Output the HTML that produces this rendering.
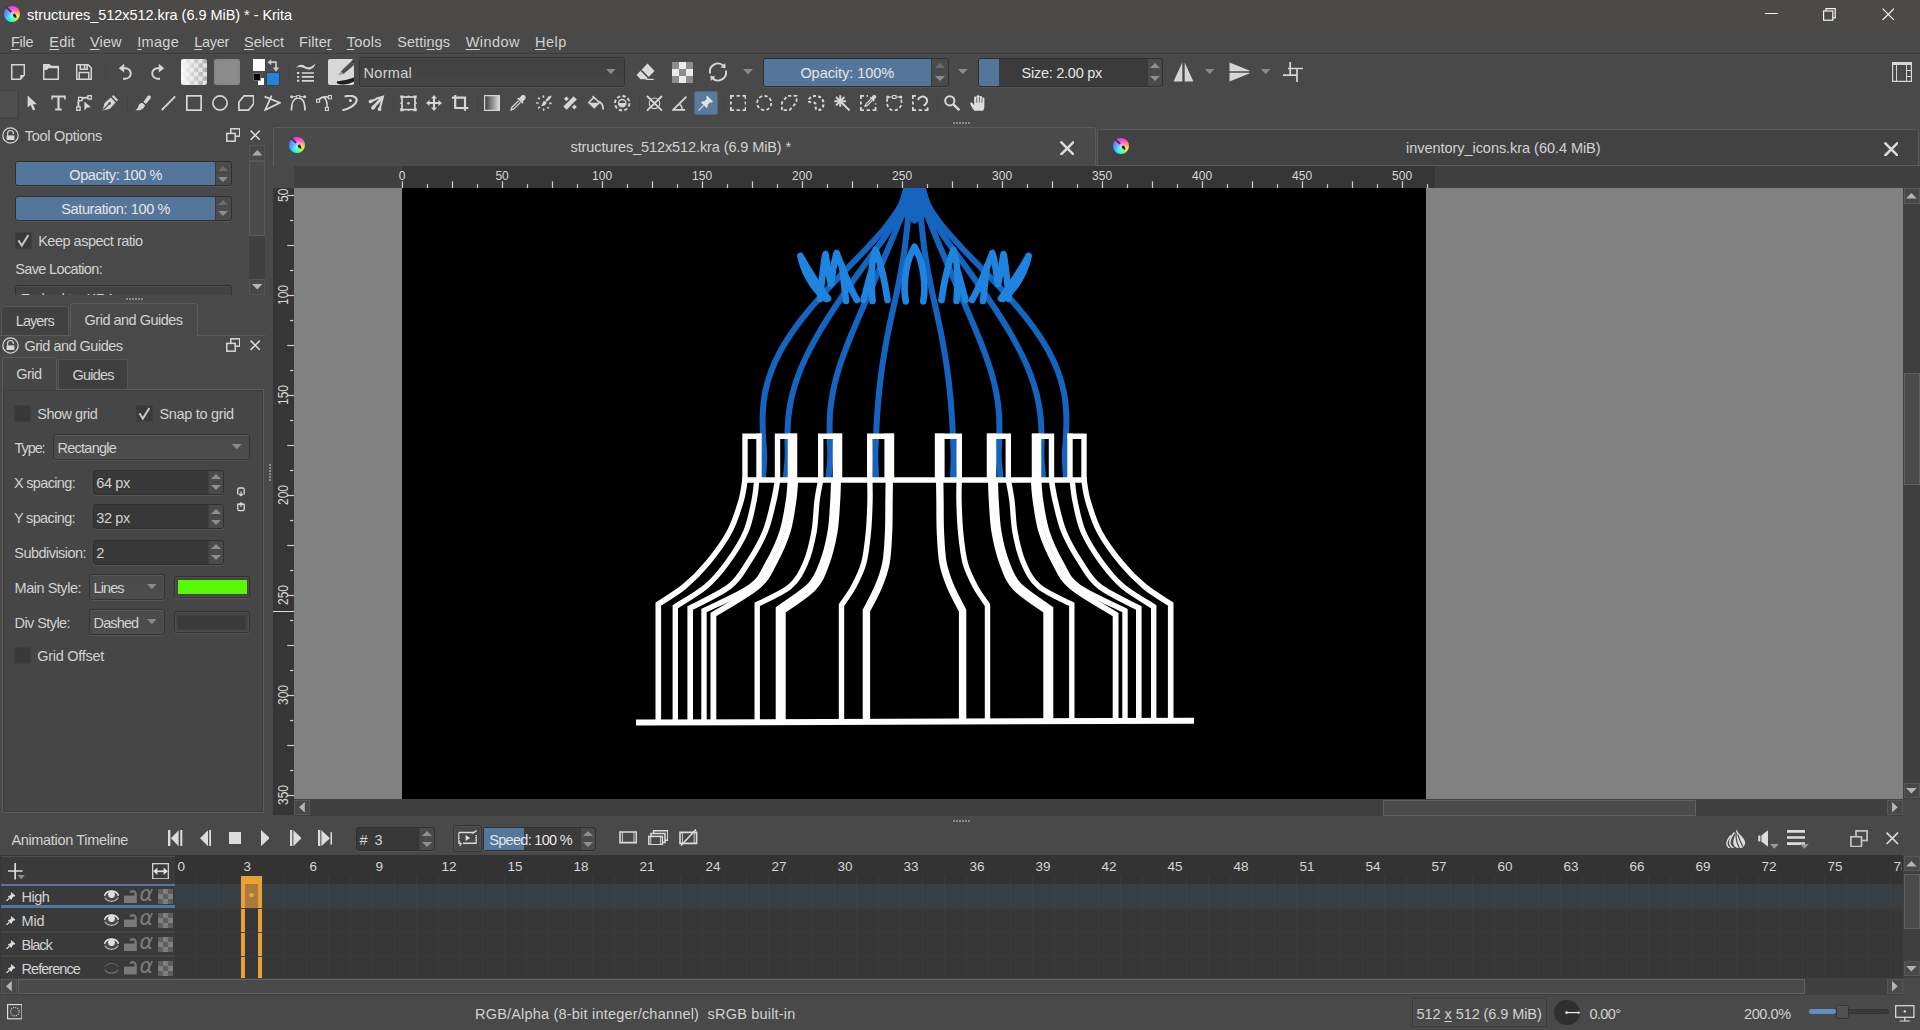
<!DOCTYPE html><html><head><meta charset="utf-8"><title>Krita</title><style>html,body{margin:0;padding:0}body{width:1920px;height:1030px;overflow:hidden;background:#494949;position:relative;font-family:"Liberation Sans",sans-serif;font-size:15px;color:#d2d2d2}
body div,body svg,body span.t{position:absolute;box-sizing:border-box}
span.t{white-space:pre}svg{overflow:hidden}
</style></head><body><svg style="left:294px;top:188px;width:1609px;height:611px;" viewBox="294 188 1609 611"><rect x="294" y="188" width="1609" height="611" fill="#818181"/><rect x="402" y="188" width="1024" height="611" fill="#000"/><g fill="none" stroke="#1565c0" stroke-width="6" stroke-linecap="butt"><path d="M907.20,184.00 C906.13,187.50 904.25,198.00 900.80,205.00 C897.35,212.00 891.97,219.00 886.50,226.00 C881.03,233.00 874.45,240.00 868.00,247.00 C861.55,254.00 854.52,261.00 847.80,268.00 C841.08,275.00 834.15,282.00 827.70,289.00 C821.25,296.00 814.88,303.00 809.10,310.00 C803.32,317.00 797.87,324.00 793.00,331.00 C788.13,338.00 783.65,345.00 779.90,352.00 C776.15,359.00 773.02,366.00 770.50,373.00 C767.98,380.00 766.10,387.00 764.80,394.00 C763.50,401.00 763.00,408.00 762.70,415.00 C762.40,422.00 762.75,429.00 763.00,436.00 C763.25,443.00 764.22,450.00 764.20,457.00 C764.18,464.00 763.12,474.50 762.90,478.00"/><path d="M909.20,184.00 C908.30,187.50 906.65,198.00 903.80,205.00 C900.95,212.00 896.47,219.00 892.10,226.00 C887.73,233.00 882.57,240.00 877.60,247.00 C872.63,254.00 867.35,261.00 862.30,268.00 C857.25,275.00 852.17,282.00 847.30,289.00 C842.43,296.00 837.65,303.00 833.10,310.00 C828.55,317.00 824.10,324.00 820.00,331.00 C815.90,338.00 811.98,345.00 808.50,352.00 C805.02,359.00 801.78,366.00 799.10,373.00 C796.42,380.00 794.15,387.00 792.40,394.00 C790.65,401.00 789.43,408.00 788.60,415.00 C787.77,422.00 787.57,429.00 787.40,436.00 C787.23,443.00 787.85,450.00 787.60,457.00 C787.35,464.00 786.18,474.50 785.90,478.00"/><path d="M911.80,184.00 C910.78,187.50 908.07,198.00 905.70,205.00 C903.33,212.00 900.40,219.00 897.60,226.00 C894.80,233.00 891.85,240.00 888.90,247.00 C885.95,254.00 882.90,261.00 879.90,268.00 C876.90,275.00 873.92,282.00 870.90,289.00 C867.88,296.00 864.80,303.00 861.80,310.00 C858.80,317.00 855.77,324.00 852.90,331.00 C850.03,338.00 847.17,345.00 844.60,352.00 C842.03,359.00 839.52,366.00 837.50,373.00 C835.48,380.00 833.77,387.00 832.50,394.00 C831.23,401.00 830.37,408.00 829.90,415.00 C829.43,422.00 829.63,429.00 829.70,436.00 C829.77,443.00 830.52,450.00 830.30,457.00 C830.08,464.00 828.72,474.50 828.40,478.00"/><path d="M913.60,184.00 C912.93,187.50 910.65,198.00 909.60,205.00 C908.55,212.00 908.08,219.00 907.30,226.00 C906.52,233.00 905.85,240.00 904.90,247.00 C903.95,254.00 902.83,261.00 901.60,268.00 C900.37,275.00 898.95,282.00 897.50,289.00 C896.05,296.00 894.42,303.00 892.90,310.00 C891.38,317.00 889.80,324.00 888.40,331.00 C887.00,338.00 885.68,345.00 884.50,352.00 C883.32,359.00 882.23,366.00 881.30,373.00 C880.37,380.00 879.58,387.00 878.90,394.00 C878.22,401.00 877.68,408.00 877.20,415.00 C876.72,422.00 876.30,429.00 876.00,436.00 C875.70,443.00 875.40,450.00 875.40,457.00 C875.40,464.00 875.90,474.50 876.00,478.00"/></g><g transform="translate(1829,0) scale(-1,1)"><g fill="none" stroke="#1565c0" stroke-width="6" stroke-linecap="butt"><path d="M907.20,184.00 C906.13,187.50 904.25,198.00 900.80,205.00 C897.35,212.00 891.97,219.00 886.50,226.00 C881.03,233.00 874.45,240.00 868.00,247.00 C861.55,254.00 854.52,261.00 847.80,268.00 C841.08,275.00 834.15,282.00 827.70,289.00 C821.25,296.00 814.88,303.00 809.10,310.00 C803.32,317.00 797.87,324.00 793.00,331.00 C788.13,338.00 783.65,345.00 779.90,352.00 C776.15,359.00 773.02,366.00 770.50,373.00 C767.98,380.00 766.10,387.00 764.80,394.00 C763.50,401.00 763.00,408.00 762.70,415.00 C762.40,422.00 762.75,429.00 763.00,436.00 C763.25,443.00 764.22,450.00 764.20,457.00 C764.18,464.00 763.12,474.50 762.90,478.00"/><path d="M909.20,184.00 C908.30,187.50 906.65,198.00 903.80,205.00 C900.95,212.00 896.47,219.00 892.10,226.00 C887.73,233.00 882.57,240.00 877.60,247.00 C872.63,254.00 867.35,261.00 862.30,268.00 C857.25,275.00 852.17,282.00 847.30,289.00 C842.43,296.00 837.65,303.00 833.10,310.00 C828.55,317.00 824.10,324.00 820.00,331.00 C815.90,338.00 811.98,345.00 808.50,352.00 C805.02,359.00 801.78,366.00 799.10,373.00 C796.42,380.00 794.15,387.00 792.40,394.00 C790.65,401.00 789.43,408.00 788.60,415.00 C787.77,422.00 787.57,429.00 787.40,436.00 C787.23,443.00 787.85,450.00 787.60,457.00 C787.35,464.00 786.18,474.50 785.90,478.00"/><path d="M911.80,184.00 C910.78,187.50 908.07,198.00 905.70,205.00 C903.33,212.00 900.40,219.00 897.60,226.00 C894.80,233.00 891.85,240.00 888.90,247.00 C885.95,254.00 882.90,261.00 879.90,268.00 C876.90,275.00 873.92,282.00 870.90,289.00 C867.88,296.00 864.80,303.00 861.80,310.00 C858.80,317.00 855.77,324.00 852.90,331.00 C850.03,338.00 847.17,345.00 844.60,352.00 C842.03,359.00 839.52,366.00 837.50,373.00 C835.48,380.00 833.77,387.00 832.50,394.00 C831.23,401.00 830.37,408.00 829.90,415.00 C829.43,422.00 829.63,429.00 829.70,436.00 C829.77,443.00 830.52,450.00 830.30,457.00 C830.08,464.00 828.72,474.50 828.40,478.00"/><path d="M913.60,184.00 C912.93,187.50 910.65,198.00 909.60,205.00 C908.55,212.00 908.08,219.00 907.30,226.00 C906.52,233.00 905.85,240.00 904.90,247.00 C903.95,254.00 902.83,261.00 901.60,268.00 C900.37,275.00 898.95,282.00 897.50,289.00 C896.05,296.00 894.42,303.00 892.90,310.00 C891.38,317.00 889.80,324.00 888.40,331.00 C887.00,338.00 885.68,345.00 884.50,352.00 C883.32,359.00 882.23,366.00 881.30,373.00 C880.37,380.00 879.58,387.00 878.90,394.00 C878.22,401.00 877.68,408.00 877.20,415.00 C876.72,422.00 876.30,429.00 876.00,436.00 C875.70,443.00 875.40,450.00 875.40,457.00 C875.40,464.00 875.90,474.50 876.00,478.00"/></g></g><path d="M904.5,186 L924.5,186 L933,212 L914.5,224 L896,212 Z" fill="#1565c0" stroke="none"/><g fill="none" stroke="#1e84e0" stroke-width="6.6" stroke-linejoin="round" stroke-linecap="round"><path d="M905.8,301.5 C903,288 905,262 914.5,247"/><path d="M872.5,301 C871,284 871,262 875.5,250 C881,264 885,282 887.5,300"/><path d="M831,284 C833,272 834,260 836.7,253 C843,270 850,288 857,300"/><path d="M842,266 L846,301"/><path d="M863.5,300 L871,272"/><path d="M820,299 C822,282 823,264 825.5,254 C827,264 829,276 831,284"/><path d="M800.5,256 C803,270 812,288 826,299"/><path d="M800.5,256 C806,266 817,284 828,298.5"/></g><g transform="translate(1829,0) scale(-1,1)"><g fill="none" stroke="#1e84e0" stroke-width="6.6" stroke-linejoin="round" stroke-linecap="round"><path d="M905.8,301.5 C903,288 905,262 914.5,247"/><path d="M872.5,301 C871,284 871,262 875.5,250 C881,264 885,282 887.5,300"/><path d="M831,284 C833,272 834,260 836.7,253 C843,270 850,288 857,300"/><path d="M842,266 L846,301"/><path d="M863.5,300 L871,272"/><path d="M820,299 C822,282 823,264 825.5,254 C827,264 829,276 831,284"/><path d="M800.5,256 C803,270 812,288 826,299"/><path d="M800.5,256 C806,266 817,284 828,298.5"/></g></g><g fill="none" stroke="#fdfdfd" stroke-linejoin="miter" stroke-linecap="butt"><path d="M745,480 L745,436.3 L761.5,436.3" stroke-width="5.4"/><path d="M759,433.6 L759,480" stroke-width="5.4"/><path d="M777.5,480 L777.5,436.3 L797.05,436.3" stroke-width="5.4"/><path d="M792.5,433.6 L792.5,480" stroke-width="9.5"/><path d="M820.7,480 L820.7,436.3 L842.05,436.3" stroke-width="5.4"/><path d="M837.5,433.6 L837.5,480" stroke-width="9.5"/><path d="M869.8,480 L869.8,436.3 L894,436.3" stroke-width="5.6"/><path d="M889.3,433.6 L889.3,480" stroke-width="9.8"/><path d="M745.00,480.00 C744.33,483.50 743.60,492.33 741.00,501.00 C738.40,509.67 734.95,521.67 729.40,532.00 C723.85,542.33 715.20,553.92 707.70,563.00 C700.20,572.08 692.63,579.67 684.40,586.50 C676.17,593.33 662.65,601.08 658.30,604.00 L658.3,722" stroke-width="5.6"/><path d="M756.80,480.00 C756.33,483.50 755.85,492.33 754.00,501.00 C752.15,509.67 750.20,521.67 745.70,532.00 C741.20,542.33 733.62,553.92 727.00,563.00 C720.38,572.08 714.62,579.22 706.00,586.50 C697.38,593.78 680.42,603.33 675.30,606.70 L675.3,722" stroke-width="5.4"/><path d="M777.60,480.00 C776.95,483.50 775.80,492.33 773.70,501.00 C771.60,509.67 769.28,521.67 765.00,532.00 C760.72,542.33 753.93,553.92 748.00,563.00 C742.07,572.08 739.03,579.00 729.40,586.50 C719.77,594.00 696.73,604.42 690.20,608.00 L690.2,722" stroke-width="5.6"/><path d="M790.30,480.00 C789.98,483.50 789.78,492.33 788.40,501.00 C787.02,509.67 785.40,521.67 782.00,532.00 C778.60,542.33 773.17,553.92 768.00,563.00 C762.83,572.08 761.67,578.57 751.00,586.50 C740.33,594.43 711.83,606.58 704.00,610.60 L704,722" stroke-width="5.4"/><path d="M795.30,480.00 C794.98,483.50 794.70,492.33 793.40,501.00 C792.10,509.67 790.73,521.67 787.50,532.00 C784.27,542.33 779.00,553.92 774.00,563.00 C769.00,572.08 767.60,577.92 757.50,586.50 C747.40,595.08 720.75,609.83 713.40,614.50 L713.4,722" stroke-width="5.8"/><path d="M820.70,480.00 C820.08,483.50 818.12,492.33 817.00,501.00 C815.88,509.67 815.92,521.67 814.00,532.00 C812.08,542.33 809.50,553.92 805.50,563.00 C801.50,572.08 798.05,579.60 790.00,586.50 C781.95,593.40 762.67,601.42 757.20,604.40 L757.2,722" stroke-width="5.4"/><path d="M836.00,480.00 C835.87,483.50 835.78,492.33 835.20,501.00 C834.62,509.67 834.28,521.67 832.50,532.00 C830.72,542.33 827.92,553.92 824.50,563.00 C821.08,572.08 819.30,578.70 812.00,586.50 C804.70,594.30 785.92,605.92 780.70,609.80 L780.7,722" stroke-width="10"/><path d="M869.80,480.00 C869.83,483.50 870.23,492.33 870.00,501.00 C869.77,509.67 869.43,521.67 868.40,532.00 C867.37,542.33 866.25,553.92 863.80,563.00 C861.35,572.08 857.42,579.50 853.70,586.50 C849.98,593.50 843.53,601.92 841.50,605.00 L841.5,722" stroke-width="5.4"/><path d="M889.30,480.00 C889.25,483.50 889.12,492.33 889.00,501.00 C888.88,509.67 889.10,521.67 888.60,532.00 C888.10,542.33 887.68,553.92 886.00,563.00 C884.32,572.08 881.77,578.57 878.50,586.50 C875.23,594.43 868.42,606.58 866.40,610.60 L866.4,722" stroke-width="7.4"/></g><g transform="translate(1829,0) scale(-1,1)"><g fill="none" stroke="#fdfdfd" stroke-linejoin="miter" stroke-linecap="butt"><path d="M745,480 L745,436.3 L761.5,436.3" stroke-width="5.4"/><path d="M759,433.6 L759,480" stroke-width="5.4"/><path d="M777.5,480 L777.5,436.3 L797.05,436.3" stroke-width="5.4"/><path d="M792.5,433.6 L792.5,480" stroke-width="9.5"/><path d="M820.7,480 L820.7,436.3 L842.05,436.3" stroke-width="5.4"/><path d="M837.5,433.6 L837.5,480" stroke-width="9.5"/><path d="M869.8,480 L869.8,436.3 L894,436.3" stroke-width="5.6"/><path d="M889.3,433.6 L889.3,480" stroke-width="9.8"/><path d="M745.00,480.00 C744.33,483.50 743.60,492.33 741.00,501.00 C738.40,509.67 734.95,521.67 729.40,532.00 C723.85,542.33 715.20,553.92 707.70,563.00 C700.20,572.08 692.63,579.67 684.40,586.50 C676.17,593.33 662.65,601.08 658.30,604.00 L658.3,722" stroke-width="5.6"/><path d="M756.80,480.00 C756.33,483.50 755.85,492.33 754.00,501.00 C752.15,509.67 750.20,521.67 745.70,532.00 C741.20,542.33 733.62,553.92 727.00,563.00 C720.38,572.08 714.62,579.22 706.00,586.50 C697.38,593.78 680.42,603.33 675.30,606.70 L675.3,722" stroke-width="5.4"/><path d="M777.60,480.00 C776.95,483.50 775.80,492.33 773.70,501.00 C771.60,509.67 769.28,521.67 765.00,532.00 C760.72,542.33 753.93,553.92 748.00,563.00 C742.07,572.08 739.03,579.00 729.40,586.50 C719.77,594.00 696.73,604.42 690.20,608.00 L690.2,722" stroke-width="5.6"/><path d="M790.30,480.00 C789.98,483.50 789.78,492.33 788.40,501.00 C787.02,509.67 785.40,521.67 782.00,532.00 C778.60,542.33 773.17,553.92 768.00,563.00 C762.83,572.08 761.67,578.57 751.00,586.50 C740.33,594.43 711.83,606.58 704.00,610.60 L704,722" stroke-width="5.4"/><path d="M795.30,480.00 C794.98,483.50 794.70,492.33 793.40,501.00 C792.10,509.67 790.73,521.67 787.50,532.00 C784.27,542.33 779.00,553.92 774.00,563.00 C769.00,572.08 767.60,577.92 757.50,586.50 C747.40,595.08 720.75,609.83 713.40,614.50 L713.4,722" stroke-width="5.8"/><path d="M820.70,480.00 C820.08,483.50 818.12,492.33 817.00,501.00 C815.88,509.67 815.92,521.67 814.00,532.00 C812.08,542.33 809.50,553.92 805.50,563.00 C801.50,572.08 798.05,579.60 790.00,586.50 C781.95,593.40 762.67,601.42 757.20,604.40 L757.2,722" stroke-width="5.4"/><path d="M836.00,480.00 C835.87,483.50 835.78,492.33 835.20,501.00 C834.62,509.67 834.28,521.67 832.50,532.00 C830.72,542.33 827.92,553.92 824.50,563.00 C821.08,572.08 819.30,578.70 812.00,586.50 C804.70,594.30 785.92,605.92 780.70,609.80 L780.7,722" stroke-width="10"/><path d="M869.80,480.00 C869.83,483.50 870.23,492.33 870.00,501.00 C869.77,509.67 869.43,521.67 868.40,532.00 C867.37,542.33 866.25,553.92 863.80,563.00 C861.35,572.08 857.42,579.50 853.70,586.50 C849.98,593.50 843.53,601.92 841.50,605.00 L841.5,722" stroke-width="5.4"/><path d="M889.30,480.00 C889.25,483.50 889.12,492.33 889.00,501.00 C888.88,509.67 889.10,521.67 888.60,532.00 C888.10,542.33 887.68,553.92 886.00,563.00 C884.32,572.08 881.77,578.57 878.50,586.50 C875.23,594.43 868.42,606.58 866.40,610.60 L866.4,722" stroke-width="7.4"/></g></g><path d="M742.3,480 L1086.7,480" stroke="#fdfdfd" stroke-width="5.6" fill="none"/><path d="M636,722.6 L1194,720.8" stroke="#fdfdfd" stroke-width="6" fill="none"/></svg>
<div style="left:0px;top:0px;width:1920px;height:29px;background:#4c4a48"></div><div style="left:3.7px;top:5.5px;width:16.6px;height:16.6px;border-radius:50%;background:conic-gradient(from 0deg,#ff2cf0 0deg,#ff5aa0 50deg,#ffe23a 110deg,#7dff5a 150deg,#22ffd0 190deg,#22d0ff 230deg,#3c8cff 275deg,#b45cff 320deg,#ff2cf0 360deg)"></div><div style="left:3.7px;top:5.5px;width:16.6px;height:16.6px;border-radius:50%;background:radial-gradient(circle at 50% 50%,rgba(255,255,255,0.55) 0,rgba(255,255,255,0) 60%)"></div><svg style="left:2.2px;top:4px;width:19.6px;height:19.6px;color:#d6d6d6;" viewBox="0 0 19.6 19.6" fill="none" stroke="currentColor" stroke-width="1.5"><g transform="scale(1.03158)"><path d="M2.6,3.2 L8.4,8.6 L9.9,7.1 L4.2,1.9 Z" fill="#36423c" stroke="none"/><path d="M8.4,8.6 L9.9,7.1 L11.9,9.1 L10.4,10.6 Z" fill="#cdbfcf" stroke="none"/><path d="M10.4,10.6 L11.9,9.1 C13.5,9.8 14.3,11.5 13.9,13.6 C12.2,13.4 11,12.6 10.4,10.6 Z" fill="#20222a" stroke="none"/></g></svg><span class="t" style="left:27.00px;top:8.00px;font-size:14.5px;line-height:14.5px;color:#ffffff;letter-spacing:-0.041px;">structures_512x512.kra (6.9 MiB) * - Krita</span><div style="left:1765px;top:13px;width:12.5px;height:1.2px;background:#f4f4f4"></div><svg style="left:1822.5px;top:8px;width:13px;height:13px;color:#f4f4f4;" viewBox="0 0 13 13" fill="none" stroke="currentColor" stroke-width="1.5"><rect x="0.6" y="3" width="9.2" height="9.2" stroke-width="1.2"/><path d="M3,3 V0.6 H12.2 V9.8 H9.8" stroke-width="1.2"/></svg><svg style="left:1881.5px;top:7.8px;width:12.6px;height:12.6px;color:#f6f6f6;" viewBox="0 0 12.6 12.6" fill="none" stroke="currentColor" stroke-width="1.5"><path d="M0.6,0.6 L12,12 M12,0.6 L0.6,12" stroke-width="1.2"/></svg><div style="left:0px;top:53px;width:1920px;height:1px;background:#3c3c3c"></div><div style="left:0px;top:54px;width:1920px;height:1px;background:#4d4d4d"></div><span class="t" style="left:11.00px;top:35.00px;font-size:14.5px;line-height:14.5px;color:#d2d2d2;letter-spacing:-0.266px;text-underline-offset:2px;"><u>F</u>ile</span><span class="t" style="left:49.30px;top:35.00px;font-size:14.5px;line-height:14.5px;color:#d2d2d2;letter-spacing:0.179px;text-underline-offset:2px;"><u>E</u>dit</span><span class="t" style="left:90.00px;top:35.00px;font-size:14.5px;line-height:14.5px;color:#d2d2d2;letter-spacing:0.133px;text-underline-offset:2px;"><u>V</u>iew</span><span class="t" style="left:137.30px;top:35.00px;font-size:14.5px;line-height:14.5px;color:#d2d2d2;letter-spacing:0.281px;text-underline-offset:2px;"><u>I</u>mage</span><span class="t" style="left:194.30px;top:35.00px;font-size:14.5px;line-height:14.5px;color:#d2d2d2;letter-spacing:-0.313px;text-underline-offset:2px;"><u>L</u>ayer</span><span class="t" style="left:244.00px;top:35.00px;font-size:14.5px;line-height:14.5px;color:#d2d2d2;letter-spacing:-0.049px;text-underline-offset:2px;"><u>S</u>elect</span><span class="t" style="left:299.00px;top:35.00px;font-size:14.5px;line-height:14.5px;color:#d2d2d2;letter-spacing:0.080px;text-underline-offset:2px;">Filte<u>r</u></span><span class="t" style="left:346.70px;top:35.00px;font-size:14.5px;line-height:14.5px;color:#d2d2d2;letter-spacing:0.230px;text-underline-offset:2px;"><u>T</u>ools</span><span class="t" style="left:397.30px;top:35.00px;font-size:14.5px;line-height:14.5px;color:#d2d2d2;letter-spacing:0.039px;text-underline-offset:2px;">Setti<u>n</u>gs</span><span class="t" style="left:465.70px;top:35.00px;font-size:14.5px;line-height:14.5px;color:#d2d2d2;letter-spacing:0.455px;text-underline-offset:2px;"><u>W</u>indow</span><span class="t" style="left:535.00px;top:35.00px;font-size:14.5px;line-height:14.5px;color:#d2d2d2;letter-spacing:0.470px;text-underline-offset:2px;"><u>H</u>elp</span><svg style="left:11px;top:64px;width:14px;height:16px;color:#d6d6d6;" viewBox="0 0 14 16" fill="none" stroke="currentColor" stroke-width="1.5"><path d="M0.7,0.7 H13.3 V11 L9.3,15.3 H0.7 Z"/><path d="M13.3,11 H9.3 V15.3 Z" fill="currentColor" stroke="none"/></svg><svg style="left:43px;top:64px;width:16px;height:16px;color:#d6d6d6;" viewBox="0 0 16 16" fill="none" stroke="currentColor" stroke-width="1.5"><path d="M0.7,15.3 V0.7 H6.2 L7.8,2.6 H15.3 V15.3 Z"/><path d="M0.7,0.7 H6.2 L7.8,2.6 H15.3 V4.2 H5.5 L4,6 H0.7 Z" fill="currentColor" stroke="none"/></svg><svg style="left:76px;top:64px;width:16px;height:16px;color:#d6d6d6;" viewBox="0 0 16 16" fill="none" stroke="currentColor" stroke-width="1.5"><path d="M0.7,0.7 H12 L15.3,4 V15.3 H0.7 Z"/><path d="M4.3,0.7 V5.3 H11.2 V0.7"/><path d="M8.6,1.4 V4.6" stroke-width="1.8"/><path d="M3.2,15.3 V8.6 H12.8 V15.3"/></svg><svg style="left:118px;top:63px;width:15px;height:17.5px;color:#d6d6d6;" viewBox="0 0 15 17.5" fill="none" stroke="currentColor" stroke-width="1.5"><path d="M4.5,5.2 H7.5 A5.2,5.2 0 0 1 7.5,15.7 H5" stroke-width="1.9"/><path d="M0.8,5.2 L6.2,0.8 V9.6 Z" fill="currentColor" stroke="none"/></svg><svg style="left:149.5px;top:63px;width:15px;height:17.5px;color:#d6d6d6;" viewBox="0 0 15 17.5" fill="none" stroke="currentColor" stroke-width="1.5"><g transform="translate(15,0) scale(-1,1)"><path d="M4.5,5.2 H7.5 A5.2,5.2 0 0 1 7.5,15.7 H5" stroke-width="1.9"/><path d="M0.8,5.2 L6.2,0.8 V9.6 Z" fill="currentColor" stroke="none"/></g></svg><div style="left:105px;top:61.5px;width:1px;height:22.5px;background:#434343"></div><svg style="left:181px;top:59px;width:26px;height:26px;border-radius:3px" viewBox="0 0 26 26"><defs><linearGradient id="gfade" x1="0" x2="1" y1="0" y2="0"><stop offset="0" stop-color="#fbfbfb" stop-opacity="1"/><stop offset="1" stop-color="#e4e4e4" stop-opacity="0.25"/></linearGradient></defs><rect width="26" height="26" fill="#e2e2e2"/><rect x="4.34" y="0" width="4.34" height="4.34" fill="#9a9a9a"/><rect x="13.02" y="0" width="4.34" height="4.34" fill="#9a9a9a"/><rect x="21.7" y="0" width="4.34" height="4.34" fill="#9a9a9a"/><rect x="0" y="4.34" width="4.34" height="4.34" fill="#9a9a9a"/><rect x="8.68" y="4.34" width="4.34" height="4.34" fill="#9a9a9a"/><rect x="17.36" y="4.34" width="4.34" height="4.34" fill="#9a9a9a"/><rect x="4.34" y="8.68" width="4.34" height="4.34" fill="#9a9a9a"/><rect x="13.02" y="8.68" width="4.34" height="4.34" fill="#9a9a9a"/><rect x="21.7" y="8.68" width="4.34" height="4.34" fill="#9a9a9a"/><rect x="0" y="13.02" width="4.34" height="4.34" fill="#9a9a9a"/><rect x="8.68" y="13.02" width="4.34" height="4.34" fill="#9a9a9a"/><rect x="17.36" y="13.02" width="4.34" height="4.34" fill="#9a9a9a"/><rect x="4.34" y="17.36" width="4.34" height="4.34" fill="#9a9a9a"/><rect x="13.02" y="17.36" width="4.34" height="4.34" fill="#9a9a9a"/><rect x="21.7" y="17.36" width="4.34" height="4.34" fill="#9a9a9a"/><rect x="0" y="21.7" width="4.34" height="4.34" fill="#9a9a9a"/><rect x="8.68" y="21.7" width="4.34" height="4.34" fill="#9a9a9a"/><rect x="17.36" y="21.7" width="4.34" height="4.34" fill="#9a9a9a"/><rect width="26" height="26" fill="url(#gfade)"/></svg><div style="left:214px;top:59px;width:26px;height:26px;background:#8c8c8c;border-radius:3px;box-shadow:inset 0 0 3px #7c7c7c"></div><div style="left:252.7px;top:59px;width:12.3px;height:12.3px;background:#fcfcfc"></div><div style="left:266.6px;top:72.8px;width:12.6px;height:12.5px;background:#1e84e0;box-shadow:0 0 0 0.8px #4a3a30"></div><div style="left:257.5px;top:78px;width:6.5px;height:6.5px;background:#fff"></div><div style="left:253.7px;top:73.8px;width:6.8px;height:6.4px;background:#000;box-shadow:0 0 0 0.8px #6a6a6a"></div><svg style="left:267px;top:59px;width:13px;height:13px;color:#c8c8c8;" viewBox="0 0 13 13" fill="none" stroke="currentColor" stroke-width="1.5"><path d="M3.5,3.2 H9 V9.5" stroke-width="1.7"/><path d="M0.3,3.2 L4.3,0.2 V6.2 Z" fill="currentColor" stroke="none"/><path d="M9,12.8 L5.8,8.6 H12.2 Z" fill="currentColor" stroke="none"/></svg><div style="left:288px;top:61.5px;width:1px;height:22.5px;background:#454545"></div><svg style="left:295px;top:62px;width:21px;height:20px;color:#d6d6d6;" viewBox="0 0 21 20" fill="none" stroke="currentColor" stroke-width="1.5"><path d="M0.8,6.5 C4,2 7,2.2 10,4.2 C13,6 17,5.5 20.3,1.2 C19.5,6.5 15,8.6 10.5,6.8 C7,5.3 4,4 0.8,6.5 Z" fill="currentColor" stroke="none"/><path d="M6.8,11 H19 M6.8,14.9 H19 M6.8,18.8 H19" stroke-width="1.7"/><path d="M2,11 H4.2 M2,14.9 H4.2 M2,18.8 H4.2" stroke-width="1.9"/></svg><svg style="left:328px;top:59px;width:26px;height:26px;border-radius:2px" viewBox="0 0 26 26"><rect width="26" height="26" fill="#d8d8d8"/><path d="M9,22 C14,24.5 20,23.5 26,19 V22.5 C20,26 13,26.5 9,24 Z" fill="#25272c"/><path d="M8.6,23 C12,21 20,21.5 26,18.2 V22 C19,25 13,25.8 9.5,24.5 Z" fill="#1d1f24"/><path d="M25,1 L13,12.5 L15.5,15 L26,6 Z" fill="#4a4c52"/><path d="M13,12.5 L10,16.5 L15.5,15 Z" fill="#9b9b9b"/><path d="M25.5,0 L26,4" stroke="#2b2d33" stroke-width="2"/><path d="M26,0 L14,11.5" stroke="#6a6c72" stroke-width="1"/></svg><svg style="left:636px;top:63px;width:19px;height:17px;color:#dadada;" viewBox="0 0 19 17" fill="none" stroke="currentColor" stroke-width="1.5"><path d="M0.5,12 L11.5,0.6 L18.6,8 L10.5,16.2 H4.5 Z" fill="currentColor" stroke="none"/><path d="M5.2,7.4 L12.8,15" stroke="#494949" stroke-width="1.5"/><path d="M10,16.4 H17.8" stroke-width="1.2"/></svg><svg style="left:672px;top:62px;width:21px;height:21px" viewBox="0 0 21 21"><rect x="0" y="0" width="7" height="7" fill="#8c8c8c"/><rect x="7" y="0" width="7" height="7" fill="#ebebeb"/><rect x="14" y="0" width="7" height="7" fill="#8c8c8c"/><rect x="0" y="7" width="7" height="7" fill="#ebebeb"/><rect x="7" y="7" width="7" height="7" fill="#8c8c8c"/><rect x="14" y="7" width="7" height="7" fill="#ebebeb"/><rect x="0" y="14" width="7" height="7" fill="#8c8c8c"/><rect x="7" y="14" width="7" height="7" fill="#ebebeb"/><rect x="14" y="14" width="7" height="7" fill="#8c8c8c"/></svg><svg style="left:708px;top:62px;width:20px;height:20px;color:#d6d6d6;" viewBox="0 0 20 20" fill="none" stroke="currentColor" stroke-width="1.5"><path d="M2.2,11.5 A8,8 0 0 1 15.5,3.8" stroke-width="1.9"/><path d="M17.8,8.5 A8,8 0 0 1 4.5,16.2" stroke-width="1.9"/><path d="M12.6,5.6 L17.6,6.2 L17.2,1 Z" fill="currentColor" stroke="none"/><path d="M7.4,14.4 L2.4,13.8 L2.8,19 Z" fill="currentColor" stroke="none"/></svg><svg style="left:743px;top:69px;width:10px;height:5.5px;color:#8a8a8a;" viewBox="0 0 10 5.5" fill="none" stroke="currentColor" stroke-width="1.5"><path d="M0,0 H10 L5,5.5 Z" fill="currentColor" stroke="none"/></svg><svg style="left:958.4px;top:69px;width:9.6px;height:5.3px;color:#8a8a8a;" viewBox="0 0 9.6 5.3" fill="none" stroke="currentColor" stroke-width="1.5"><path d="M0,0 H9.6 L4.8,5.3 Z" fill="currentColor" stroke="none"/></svg><svg style="left:1172.5px;top:62px;width:21px;height:20px;color:#d6d6d6;" viewBox="0 0 21 20" fill="none" stroke="currentColor" stroke-width="1.5"><path d="M9.3,0.5 V19.5 H0.6 Z" fill="currentColor" stroke="none"/><path d="M11.7,0.5 V19.5 H20.4 Z" fill="currentColor" stroke="none"/></svg><svg style="left:1204.7px;top:69px;width:9.4px;height:5.3px;color:#8a8a8a;" viewBox="0 0 9.4 5.3" fill="none" stroke="currentColor" stroke-width="1.5"><path d="M0,0 H9.4 L4.7,5.3 Z" fill="currentColor" stroke="none"/></svg><svg style="left:1228.5px;top:62px;width:21px;height:20px;color:#d6d6d6;" viewBox="0 0 21 20" fill="none" stroke="currentColor" stroke-width="1.5"><path d="M0.5,9.3 H20 V0.6 Z" fill="none" stroke="none" transform="translate(0,0)"/><path d="M0.5,0.6 L20.3,8.6 V9.3 H0.5 Z" fill="currentColor" stroke="none"/><path d="M0.5,19.4 L20.3,11.4 V10.7 H0.5 Z" fill="currentColor" stroke="none"/></svg><svg style="left:1261px;top:69px;width:9.4px;height:5.3px;color:#8a8a8a;" viewBox="0 0 9.4 5.3" fill="none" stroke="currentColor" stroke-width="1.5"><path d="M0,0 H9.4 L4.7,5.3 Z" fill="currentColor" stroke="none"/></svg><svg style="left:1283px;top:62px;width:20px;height:20px;color:#d6d6d6;" viewBox="0 0 20 20" fill="none" stroke="currentColor" stroke-width="1.5"><path d="M7.2,0 V13.2 H0 M5,6.5 H20 M14,6.5 V20 M7.2,13.2 H14" stroke-width="1.7"/></svg><svg style="left:1892px;top:62px;width:20px;height:20px;color:#d6d6d6;" viewBox="0 0 20 20" fill="none" stroke="currentColor" stroke-width="1.5"><path d="M0.6,0.6 H19.4 V19.4 H0.6 Z" stroke-width="1.2"/><path d="M0.6,2 H19.4" stroke-width="2"/><path d="M4.5,3 V19.3 M14.5,3 V19.3 M14.5,8.5 H19.3 M14.5,14.5 H19.3" stroke-width="1"/></svg><div style="left:0px;top:90px;width:18.5px;height:28.5px;background:#4f4f4f;border:1px solid #434343;border-left:none;box-shadow:inset -1px -1px 0 #454545"></div><svg style="left:27px;top:95px;width:11px;height:16px;color:#d6d6d6;" viewBox="0 0 11 16" fill="none" stroke="currentColor" stroke-width="1.5"><path d="M0.6,0.4 V12.6 L3.6,10 L6,15.4 L8.2,14.4 L5.9,9.2 H10 Z" fill="currentColor" stroke="none"/></svg><svg style="left:50.5px;top:95px;width:15px;height:16px;color:#d6d6d6;" viewBox="0 0 15 16" fill="none" stroke="currentColor" stroke-width="1.5"><path d="M0.3,0.6 H14.7 V4.6 H13.2 V2.6 H8.6 V13.6 H10.8 V15.4 H4.2 V13.6 H6.4 V2.6 H1.8 V4.6 H0.3 Z" fill="currentColor" stroke="none"/></svg><svg style="left:76px;top:95px;width:16px;height:16px;color:#d6d6d6;" viewBox="0 0 16 16" fill="none" stroke="currentColor" stroke-width="1.5"><path d="M2.4,12.2 V7 C2.4,4.4 4,3.4 6.4,3.2 C8.6,3 10.8,2.8 12.4,2.2" stroke-width="1.9"/><rect x="0.7" y="11.9" width="3.4" height="3.4" stroke-width="1.3" fill="#494949"/><rect x="2.6" y="2.3" width="3.4" height="3.4" stroke-width="1.3" fill="#494949"/><rect x="12" y="0.7" width="3.4" height="3.4" stroke-width="1.3" fill="#494949"/><path d="M8.4,6.6 V15.6 L11,12.6 L15,12.2 Z" fill="currentColor" stroke="none"/></svg><svg style="left:102px;top:95px;width:16.5px;height:16px;color:#d6d6d6;" viewBox="0 0 16.5 16" fill="none" stroke="currentColor" stroke-width="1.5"><path d="M0.4,15.8 L2.6,8 L8.8,2.6 L13.6,7.6 L8,13.8 Z" fill="currentColor" stroke="none"/><path d="M1,15.2 L7,9" stroke="#494949" stroke-width="1.2"/><circle cx="7.6" cy="8.4" r="1.3" fill="#494949" stroke="none"/><path d="M10.6,0.8 L15.4,5.8" stroke-width="2"/></svg><div style="left:126.5px;top:95px;width:1px;height:17px;background:#434343"></div><svg style="left:134.5px;top:95px;width:16px;height:16px;color:#d6d6d6;" viewBox="0 0 16 16" fill="none" stroke="currentColor" stroke-width="1.5"><path d="M15.4,0.8 C14.2,0.2 13,0.6 12.2,1.6 L8.4,7 L10.8,9 L15.2,4 C16,3 16,1.6 15.4,0.8 Z" fill="currentColor" stroke="none"/><path d="M7.6,8 L9.9,10 C9.6,13.2 6,16 0.3,15.2 C2.6,14 3,12.4 3.6,10.6 C4.2,8.8 6,7.6 7.6,8 Z" fill="currentColor" stroke="none"/><path d="M7.6,7.2 L10.6,9.8" stroke="#494949" stroke-width="0.9"/></svg><svg style="left:160.5px;top:95px;width:15px;height:16px;color:#d6d6d6;" viewBox="0 0 15 16" fill="none" stroke="currentColor" stroke-width="1.5"><path d="M0.8,15 L14.2,1.4" stroke-width="1.8"/></svg><svg style="left:186px;top:95px;width:16px;height:16px;color:#d6d6d6;" viewBox="0 0 16 16" fill="none" stroke="currentColor" stroke-width="1.5"><rect x="0.85" y="0.85" width="14.3" height="14.3" stroke-width="1.7"/></svg><svg style="left:212px;top:95px;width:16px;height:16px;color:#d6d6d6;" viewBox="0 0 16 16" fill="none" stroke="currentColor" stroke-width="1.5"><circle cx="8" cy="8" r="7.1" stroke-width="1.7"/></svg><svg style="left:237.7px;top:95px;width:16.5px;height:16px;color:#d6d6d6;" viewBox="0 0 16.5 16" fill="none" stroke="currentColor" stroke-width="1.5"><path d="M0.9,15.1 V7 L6,0.9 H15.6 V9 L10.5,15.1 Z" stroke-width="1.7"/></svg><svg style="left:263.5px;top:95px;width:17px;height:16px;color:#d6d6d6;" viewBox="0 0 17 16" fill="none" stroke="currentColor" stroke-width="1.5"><path d="M7.6,0.6 L1.2,15 L15.8,7.8 L0.6,1.6" stroke-width="1.7"/></svg><svg style="left:290px;top:95px;width:16.5px;height:16px;color:#d6d6d6;" viewBox="0 0 16.5 16" fill="none" stroke="currentColor" stroke-width="1.5"><path d="M1.4,15.6 C1.4,7 4.4,3 8.2,3 C12,3 15,7 15,15.6" stroke-width="1.7"/><path d="M1.6,1.7 H14.8" stroke-width="1"/><circle cx="1.7" cy="1.7" r="1.5" fill="currentColor" stroke="none"/><circle cx="14.7" cy="1.7" r="1.5" fill="currentColor" stroke="none"/><rect x="6.7" y="0.3" width="3" height="3" stroke-width="1" fill="#494949"/></svg><svg style="left:315.8px;top:95px;width:16.5px;height:16px;color:#d6d6d6;" viewBox="0 0 16.5 16" fill="none" stroke="currentColor" stroke-width="1.5"><path d="M2.4,5 C5,2 9,1.4 12.6,2.2" stroke-width="1.6"/><path d="M8.2,2.2 C10.6,5 11.4,9 11,12.4" stroke-width="1.6"/><rect x="0.6" y="4.2" width="3" height="3" stroke-width="1.1" fill="#494949"/><rect x="12.4" y="0.6" width="3.2" height="3.2" stroke-width="1.1" fill="#494949"/><rect x="9.4" y="12.4" width="3" height="3" stroke-width="1.1" fill="#494949"/></svg><svg style="left:342px;top:95px;width:16.5px;height:16px;color:#d6d6d6;" viewBox="0 0 16.5 16" fill="none" stroke="currentColor" stroke-width="1.5"><path d="M2.6,1.6 C8,0 15.4,0.8 14.6,5.6 C13.8,10 7,13.8 0.4,15.2" stroke-width="2.1"/><circle cx="8.4" cy="5.6" r="1.5" fill="currentColor" stroke="none"/></svg><svg style="left:368px;top:95px;width:17px;height:16px;color:#d6d6d6;" viewBox="0 0 17 16" fill="none" stroke="currentColor" stroke-width="1.5"><path d="M16.4,0.2 L7.6,2.8 L10.6,4.6 L5,10.6 L7,12.4 L12.6,6.6 L14,9.6 Z" fill="currentColor" stroke="none"/><path d="M9.4,3.6 L3,6.2" stroke-width="2"/><path d="M13.4,7.6 L11.8,13.6" stroke-width="2"/><ellipse cx="2.8" cy="6.4" rx="2.3" ry="1.7" transform="rotate(-20 2.8 6.4)" fill="currentColor" stroke="none"/><ellipse cx="5.4" cy="12.4" rx="2.5" ry="1.9" transform="rotate(-45 5.4 12.4)" fill="currentColor" stroke="none"/><ellipse cx="11.6" cy="14" rx="1.8" ry="2.1" fill="currentColor" stroke="none"/></svg><div style="left:393px;top:95px;width:1px;height:17px;background:#434343"></div><svg style="left:399.5px;top:95px;width:17px;height:16.5px;color:#d6d6d6;" viewBox="0 0 17 16.5" fill="none" stroke="currentColor" stroke-width="1.5"><rect x="2" y="2" width="13" height="12.6" stroke-width="1.7"/><path d="M0.2,1.2 H3.6 M13.4,1.2 H16.8 M0.2,15.4 H3.6 M13.4,15.4 H16.8 M1.2,0.4 V3.4 M15.8,0.4 V3.4 M1.2,13 V16.2 M15.8,13 V16.2 M0.2,8.3 H2 M15,8.3 H16.8 M8.5,0.6 V2 M8.5,14.6 V16" stroke-width="1.6"/><circle cx="8.5" cy="8.3" r="1.3" fill="currentColor" stroke="none"/></svg><svg style="left:426px;top:95px;width:16px;height:16px;color:#d6d6d6;" viewBox="0 0 16 16" fill="none" stroke="currentColor" stroke-width="1.5"><path d="M8,2.4 V13.6 M2.4,8 H13.6" stroke-width="2.1"/><path d="M8,0 L11,3.6 H5 Z M8,16 L11,12.4 H5 Z M0,8 L3.6,5 V11 Z M16,8 L12.4,5 V11 Z" fill="currentColor" stroke="none"/></svg><svg style="left:452px;top:95px;width:16.5px;height:16px;color:#d6d6d6;" viewBox="0 0 16.5 16" fill="none" stroke="currentColor" stroke-width="1.5"><path d="M3.2,0 V13 H16.4 M0,2.6 H13 V15.8" stroke-width="2.2"/></svg><div style="left:477px;top:95px;width:1px;height:17px;background:#434343"></div><svg style="left:484px;top:95px;width:16px;height:16px" viewBox="0 0 16 16"><defs><linearGradient id="tg" x1="0" x2="1"><stop offset="0" stop-color="#3a3a3a"/><stop offset="1" stop-color="#dcdcdc"/></linearGradient></defs><rect x="0.6" y="0.6" width="14.8" height="14.8" fill="url(#tg)" stroke="#d6d6d6" stroke-width="1.2"/></svg><svg style="left:510px;top:95px;width:16px;height:16px;color:#d6d6d6;" viewBox="0 0 16 16" fill="none" stroke="currentColor" stroke-width="1.5"><g transform="scale(1)"><path d="M11.2,0.8 C12.6,-0.4 15,0 15.6,1.8 C16,3.2 15.2,4.4 14.2,5.2 L12.8,6.6 L13.6,7.6 L12.4,8.8 L7.2,3.6 L8.4,2.4 L9.4,3.2 Z" fill="currentColor" stroke="none"/><path d="M8.6,5.6 L2,12.2 L1,14.9 L3.8,14 L10.4,7.4" stroke-width="1.3"/></g></svg><svg style="left:536px;top:95px;width:16.5px;height:16px;color:#d6d6d6;" viewBox="0 0 16.5 16" fill="none" stroke="currentColor" stroke-width="1.5"><path d="M15.8,0.4 L12.4,1.6 L9.4,5.4 L11,6.8 L14.4,3.6 Z" fill="currentColor" stroke="none"/><path d="M8.8,6 L10.6,7.6 C10.2,10.2 7.6,11.4 4.6,10.8 C6.2,10 6.4,8.6 6.8,7.4 C7.2,6.4 8,5.8 8.8,6 Z" fill="currentColor" stroke="none"/><path d="M7.4,0.6 V2.8 M2.2,2.6 L3.8,4.2 M0.2,8 H2.6 M2.2,13.4 L3.8,11.8 M7.6,13.4 V15.8 M12.8,13.4 L11.4,12 M13.2,8.4 H15.6" stroke-width="1.6"/></svg><svg style="left:562.5px;top:95px;width:15px;height:16px;color:#d6d6d6;" viewBox="0 0 15 16" fill="none" stroke="currentColor" stroke-width="1.5"><path d="M10.6,1.2 L13.8,4.4 L3.6,14.8 L0.4,11.6 Z" fill="currentColor" stroke="none"/><path d="M3.4,1.4 L5.8,3.8 L3.4,6.2 L1,3.8 Z M11.4,9.6 L13.8,12 L11.4,14.4 L9,12 Z" fill="currentColor" stroke="none"/></svg><svg style="left:588px;top:95px;width:16px;height:16px;color:#d6d6d6;" viewBox="0 0 16 16" fill="none" stroke="currentColor" stroke-width="1.5"><path d="M4.6,1 L11.4,7.6 L6.2,12.8 L0.8,7.4 L5.6,2.6" stroke-width="1.5"/><path d="M1.4,7.8 H11 L6.2,12.6 Z" fill="currentColor" stroke="none"/><path d="M11,6.6 C13.6,8 15.2,10.6 15.2,14.6" stroke-width="1.7"/></svg><svg style="left:614px;top:95px;width:16.5px;height:16.5px;color:#d6d6d6;" viewBox="0 0 16.5 16.5" fill="none" stroke="currentColor" stroke-width="1.5"><circle cx="8.2" cy="8.2" r="7.2" stroke-width="1.9" stroke-dasharray="3.4,2.25"/><circle cx="8.2" cy="8.2" r="3.7" stroke-width="1.3"/><path d="M4.6,8 A3.6,3.6 0 0 0 11.8,8 Z" fill="currentColor" stroke="none"/></svg><div style="left:639px;top:95px;width:1px;height:17px;background:#434343"></div><svg style="left:645.5px;top:95px;width:17px;height:16.5px;color:#d6d6d6;" viewBox="0 0 17 16.5" fill="none" stroke="currentColor" stroke-width="1.5"><path d="M1,1 L16,15.6 M16,1 L1,15.6" stroke-width="1.9"/><circle cx="8.5" cy="8.3" r="5.3" stroke-width="1.1"/></svg><svg style="left:671.5px;top:95px;width:15.5px;height:16px;color:#d6d6d6;" viewBox="0 0 15.5 16" fill="none" stroke="currentColor" stroke-width="1.5"><path d="M14.4,1.6 L1.2,14.8 H13.2" stroke-width="1.8"/><path d="M7,8.8 C9.2,10.2 10.2,12.4 10.2,14.6" stroke-width="1.5"/></svg><div style="left:694px;top:91px;width:24px;height:24px;background:#5a7b9e;border-radius:2.5px;border:1px solid #4a6988"></div><svg style="left:698px;top:95px;width:16px;height:16px;color:#e2e2e2;" viewBox="0 0 16 16" fill="none" stroke="currentColor" stroke-width="1.5"><path d="M9.2,0.8 L15,6.4 L13.4,7.8 L12.2,7.2 L9.6,9.8 C10,11 9.6,12 8.6,13 L3,7.4 C4,6.4 5,6 6.2,6.4 L8.8,3.8 L8,2.4 Z" fill="currentColor" stroke="none"/><path d="M5.6,10.4 L0.6,15.4" stroke-width="1.2"/></svg><div style="left:722.5px;top:95px;width:1px;height:17px;background:#434343"></div><svg style="left:729.7px;top:95px;width:16.5px;height:16px;color:#d6d6d6;" viewBox="0 0 16.5 16" fill="none" stroke="currentColor" stroke-width="1.5"><path d="M0.9,4 V0.9 H4 M6.6,0.9 H9.9 M12.5,0.9 H15.6 V4 M15.6,6.4 V9.6 M15.6,12 V15.1 H12.5 M9.9,15.1 H6.6 M4,15.1 H0.9 V12 M0.9,9.6 V6.4" stroke-width="1.8"/></svg><svg style="left:755.6px;top:95px;width:16.5px;height:16px;color:#d6d6d6;" viewBox="0 0 16.5 16" fill="none" stroke="currentColor" stroke-width="1.5"><circle cx="8.2" cy="8" r="7.1" stroke-width="1.8" stroke-dasharray="3.3,2.27"/></svg><svg style="left:781.4px;top:95px;width:16.5px;height:16px;color:#d6d6d6;" viewBox="0 0 16.5 16" fill="none" stroke="currentColor" stroke-width="1.5"><path d="M0.9,15.1 V7.6 L6.4,0.9 H15.6 V7.2 L8.6,15.1 Z" stroke-width="1.8" stroke-dasharray="3.3,2.3"/></svg><svg style="left:808px;top:95px;width:16.5px;height:16px;color:#d6d6d6;" viewBox="0 0 16.5 16" fill="none" stroke="currentColor" stroke-width="1.5"><path d="M1,4.4 C2.4,1 8,0 12,2.2 C15.4,4.2 16.4,8.6 14.8,12 C13.6,14.6 10.6,16 8.6,14.6 C6.8,13.2 8.4,10.6 7.4,8.6 C6.4,6.8 2.6,7.8 1,6.6 Z" stroke-width="2.1" stroke-dasharray="3,2.2"/></svg><svg style="left:833.7px;top:95px;width:16.5px;height:16px;color:#d6d6d6;" viewBox="0 0 16.5 16" fill="none" stroke="currentColor" stroke-width="1.5"><path d="M6.2,6.2 L15.6,15.4" stroke-width="2"/><path d="M6.2,0.2 V11.8 M0.4,6.2 H12 M2,2 L10.4,10.4 M10.4,2 L2,10.4" stroke-width="1.9"/></svg><svg style="left:860px;top:95px;width:16.5px;height:16px;color:#d6d6d6;" viewBox="0 0 16.5 16" fill="none" stroke="currentColor" stroke-width="1.5"><path d="M0.9,4 V0.9 H4 M6.6,0.9 H8 M0.9,6.4 V9.6 M0.9,12 V15.1 H4 M6.6,15.1 H9.9 M12.5,15.1 H15.6 V12 M15.6,9.6 V8.4" stroke-width="1.8"/><g transform="translate(4.2,0) scale(0.76)"><path d="M11.2,0.8 C12.6,-0.4 15,0 15.6,1.8 C16,3.2 15.2,4.4 14.2,5.2 L12.8,6.6 L13.6,7.6 L12.4,8.8 L7.2,3.6 L8.4,2.4 L9.4,3.2 Z" fill="currentColor" stroke="none"/><path d="M8.6,5.6 L2,12.2 L1,14.9 L3.8,14 L10.4,7.4" stroke-width="1.5"/></g></svg><svg style="left:886px;top:95px;width:16.5px;height:16px;color:#d6d6d6;" viewBox="0 0 16.5 16" fill="none" stroke="currentColor" stroke-width="1.5"><path d="M1.4,3.4 C0.4,8 1,12 4.4,14.4 C7,16 10.6,15.6 13,13.6 C15.8,11 15.8,7 15,3.4" stroke-width="1.8" stroke-dasharray="3.2,2.3"/><path d="M1.6,2 H15" stroke-width="1.1"/><circle cx="1.8" cy="2" r="1.6" fill="currentColor" stroke="none"/><circle cx="14.8" cy="2" r="1.6" fill="currentColor" stroke="none"/><rect x="6.7" y="0.5" width="3.2" height="3" fill="#494949" stroke-width="1"/></svg><svg style="left:912px;top:95px;width:16.5px;height:16px;color:#d6d6d6;" viewBox="0 0 16.5 16" fill="none" stroke="currentColor" stroke-width="1.5"><path d="M0.9,4 V0.9 H4 M0.9,6.4 V9.6 M0.9,12 V15.1 H4 M6.6,15.1 H9.9 M12.5,15.1 H15.6 V12.6" stroke-width="1.8"/><path d="M5.6,5.4 C7,1.6 11.6,0.4 14,3 C16.4,5.6 14.6,9.6 11.2,11" stroke-width="2"/><path d="M4.6,4.6 L6.8,6.4 M10.2,10 L12,12.2" stroke-width="1.2" stroke="#494949"/></svg><div style="left:937px;top:95px;width:1px;height:17px;background:#434343"></div><svg style="left:943.7px;top:95px;width:16.5px;height:16px;color:#d6d6d6;" viewBox="0 0 16.5 16" fill="none" stroke="currentColor" stroke-width="1.5"><circle cx="5.8" cy="5.8" r="4.6" stroke-width="2"/><path d="M9.4,9.4 L15.4,15.2" stroke-width="2.6"/></svg><svg style="left:969.6px;top:95px;width:15px;height:16px;color:#dedede;" viewBox="0 0 15 16" fill="none" stroke="currentColor" stroke-width="1.5"><g transform="scale(1.22,1)"><path d="M3.6,15.8 C1.6,12.6 0.6,10.4 0.2,8.4 C0.2,7.4 1.4,7 2,8 L3.4,10.2 V2.6 C3.4,1.2 5.4,1.2 5.4,2.6 V1.4 C5.4,0 7.6,0 7.6,1.4 V2 C7.6,0.8 9.8,0.8 9.8,2 V3.4 C9.8,2.2 11.8,2.2 11.8,3.4 V11 C11.8,13 11.2,14.6 10.8,15.8 Z" fill="currentColor" stroke="none"/><path d="M5.5,2.6 V7.6 M7.7,2 V7.6 M9.8,3.4 V7.6" stroke="#494949" stroke-width="0.7"/></g></svg><div style="left:358.5px;top:57px;width:266.5px;height:29.5px;background:linear-gradient(#404040,#464646);border-radius:3px;border:1px solid #343434;box-shadow:0 1px 0 #555,inset 0 1px 0 #4a4a4a"></div><span class="t" style="left:363.60px;top:66.00px;font-size:14.5px;line-height:14.5px;color:#d2d2d2;letter-spacing:0.279px;">Normal</span><svg style="left:606.4px;top:68.75px;width:9.6px;height:5.3px;color:#8a8a8a;" viewBox="0 0 9.6 5.3" fill="none" stroke="currentColor" stroke-width="1.5"><path d="M0,0 H9.6 L4.8,5.3 Z" fill="currentColor" stroke="none"/></svg><div style="left:763px;top:57.6px;width:185.5px;height:29px;background:#3b3b3b;border-radius:3px;border:1px solid #2f2f2f;box-shadow:0 1px 0 #545454"></div><div style="left:764px;top:58.6px;width:167.5px;height:27px;background:#54769a;border-radius:2px 0 0 2px"></div><div style="left:931px;top:58.6px;width:16.5px;height:27px;background:#4b4b4b;border-left:1px solid #3a3a3a;border-radius:0 2px 2px 0"></div><svg style="left:934.75px;top:62.75px;width:10px;height:5px;color:#6b6b6b;" viewBox="0 0 10 5" fill="none" stroke="currentColor" stroke-width="1.5"><path d="M0,5 H10 L5,0 Z" fill="currentColor" stroke="none"/></svg><svg style="left:934.75px;top:76.45px;width:10px;height:5px;color:#8e8e8e;" viewBox="0 0 10 5" fill="none" stroke="currentColor" stroke-width="1.5"><path d="M0,0 H10 L5,5 Z" fill="currentColor" stroke="none"/></svg><span class="t" style="left:800.40px;top:66.00px;font-size:14.5px;line-height:14.5px;color:#e6e6e6;letter-spacing:-0.053px;">Opacity: 100%</span><div style="left:977.5px;top:57.6px;width:185.5px;height:29px;background:#3b3b3b;border-radius:3px;border:1px solid #2f2f2f;box-shadow:0 1px 0 #545454"></div><div style="left:978.5px;top:58.6px;width:20.5px;height:27px;background:#54769a;border-radius:2px 0 0 2px"></div><div style="left:1146.5px;top:58.6px;width:15.5px;height:27px;background:#4b4b4b;border-left:1px solid #3a3a3a;border-radius:0 2px 2px 0"></div><svg style="left:1149.75px;top:62.75px;width:10px;height:5px;color:#8e8e8e;" viewBox="0 0 10 5" fill="none" stroke="currentColor" stroke-width="1.5"><path d="M0,5 H10 L5,0 Z" fill="currentColor" stroke="none"/></svg><svg style="left:1149.75px;top:76.45px;width:10px;height:5px;color:#8e8e8e;" viewBox="0 0 10 5" fill="none" stroke="currentColor" stroke-width="1.5"><path d="M0,0 H10 L5,5 Z" fill="currentColor" stroke="none"/></svg><span class="t" style="left:1021.50px;top:66.00px;font-size:14.5px;line-height:14.5px;color:#e6e6e6;letter-spacing:-0.255px;">Size: 2.00 px</span><div style="left:953px;top:122px;width:17px;height:2px;background:repeating-linear-gradient(90deg,#8a8a8a 0 2px,transparent 2px 3px)"></div><svg style="left:1.5px;top:126.5px;width:17px;height:17px;color:#d8d8d8;" viewBox="0 0 17 17" fill="none" stroke="currentColor" stroke-width="1.5"><circle cx="8.5" cy="8.5" r="7.7" stroke-width="1.2"/><path d="M5.6,8.6 V6.4 A2.9,2.9 0 0 1 11.4,6.4 V7" stroke-width="1.2"/><rect x="4.6" y="8.4" width="7.8" height="4.6" fill="currentColor" stroke="none"/></svg><span class="t" style="left:24.80px;top:129.00px;font-size:14.5px;line-height:14.5px;color:#d2d2d2;letter-spacing:-0.282px;">Tool Options</span><svg style="left:225.8px;top:127.8px;width:14.5px;height:14px;color:#d8d8d8;" viewBox="0 0 14.5 14" fill="none" stroke="currentColor" stroke-width="1.5"><rect x="4.8" y="0.8" width="8.9" height="7.4" stroke-width="1.5"/><rect x="0.8" y="5.4" width="8.4" height="7.8" stroke-width="1.5" fill="#494949"/></svg><svg style="left:249.8px;top:129.8px;width:10.5px;height:10.5px;color:#dcdcdc;" viewBox="0 0 10.5 10.5" fill="none" stroke="currentColor" stroke-width="1.5"><path d="M0.6,0.6 L9.9,9.9 M9.9,0.6 L0.6,9.9" stroke-width="1.5"/></svg><div style="left:248.6px;top:145.3px;width:16.4px;height:150px;background:#404040"></div><div style="left:248.6px;top:145.3px;width:16.4px;height:15.5px;background:#484848;border:1px solid #555"></div><svg style="left:251.5px;top:150.2px;width:10.6px;height:5.6px;color:#a8a8a8;" viewBox="0 0 10.6 5.6" fill="none" stroke="currentColor" stroke-width="1.5"><path d="M0,5.6 H10.6 L5.3,0 Z" fill="currentColor" stroke="none"/></svg><div style="left:248.6px;top:161.3px;width:16.4px;height:75px;background:#4b4b4b;border:1px solid #5a5a5a"></div><div style="left:248.6px;top:279.4px;width:16.4px;height:15.3px;background:#484848;border:1px solid #555"></div><svg style="left:251.5px;top:284.4px;width:10.6px;height:5.6px;color:#b4b4b4;" viewBox="0 0 10.6 5.6" fill="none" stroke="currentColor" stroke-width="1.5"><path d="M0,0 H10.6 L5.3,5.6 Z" fill="currentColor" stroke="none"/></svg><div style="left:15.3px;top:161.4px;width:216.8px;height:25px;background:#3b3b3b;border-radius:3px;border:1px solid #2f2f2f;box-shadow:0 1px 0 #545454"></div><div style="left:16.3px;top:162.4px;width:199px;height:23px;background:#54769a;border-radius:2px 0 0 2px"></div><div style="left:214.6px;top:162.4px;width:16.5px;height:23px;background:#4b4b4b;border-left:1px solid #3a3a3a;border-radius:0 2px 2px 0"></div><svg style="left:218.35px;top:165.55px;width:10px;height:5px;color:#6b6b6b;" viewBox="0 0 10 5" fill="none" stroke="currentColor" stroke-width="1.5"><path d="M0,5 H10 L5,0 Z" fill="currentColor" stroke="none"/></svg><svg style="left:218.35px;top:177.25px;width:10px;height:5px;color:#8e8e8e;" viewBox="0 0 10 5" fill="none" stroke="currentColor" stroke-width="1.5"><path d="M0,0 H10 L5,5 Z" fill="currentColor" stroke="none"/></svg><span class="t" style="left:69.30px;top:168.00px;font-size:14.5px;line-height:14.5px;color:#e6e6e6;letter-spacing:-0.401px;">Opacity: 100 %</span><div style="left:15.3px;top:195.6px;width:216.8px;height:25px;background:#3b3b3b;border-radius:3px;border:1px solid #2f2f2f;box-shadow:0 1px 0 #545454"></div><div style="left:16.3px;top:196.6px;width:199px;height:23px;background:#54769a;border-radius:2px 0 0 2px"></div><div style="left:214.6px;top:196.6px;width:16.5px;height:23px;background:#4b4b4b;border-left:1px solid #3a3a3a;border-radius:0 2px 2px 0"></div><svg style="left:218.35px;top:199.75px;width:10px;height:5px;color:#6b6b6b;" viewBox="0 0 10 5" fill="none" stroke="currentColor" stroke-width="1.5"><path d="M0,5 H10 L5,0 Z" fill="currentColor" stroke="none"/></svg><svg style="left:218.35px;top:211.45px;width:10px;height:5px;color:#8e8e8e;" viewBox="0 0 10 5" fill="none" stroke="currentColor" stroke-width="1.5"><path d="M0,0 H10 L5,5 Z" fill="currentColor" stroke="none"/></svg><span class="t" style="left:61.30px;top:202.00px;font-size:14.5px;line-height:14.5px;color:#e6e6e6;letter-spacing:-0.386px;">Saturation: 100 %</span><div style="left:14.8px;top:232px;width:17px;height:17px;background:#393939;border:1px solid #3f3f3f"></div><svg style="left:14.8px;top:232px;width:17px;height:17px;color:#c6c6c6;" viewBox="0 0 17 17" fill="none" stroke="currentColor" stroke-width="1.5"><path d="M3.4,8.2 L6.8,13.6 L13.4,3" stroke-width="2"/></svg><span class="t" style="left:38.20px;top:234.00px;font-size:14.5px;line-height:14.5px;color:#d2d2d2;letter-spacing:-0.496px;">Keep aspect ratio</span><span class="t" style="left:15.30px;top:262.00px;font-size:14.5px;line-height:14.5px;color:#d2d2d2;letter-spacing:-0.658px;">Save Location:</span><div style="left:14px;top:284.5px;width:222px;height:10.7px;overflow:hidden"><div style="left:1.3px;top:0.2px;width:216.8px;height:26px;background:linear-gradient(#414141,#474747);border-radius:3px;border:1px solid #323232;box-shadow:inset 0 1px 0 #4c4c4c"></div><span class="t" style="left:6.50px;top:7.00px;font-size:14.5px;line-height:14.5px;color:#d2d2d2;letter-spacing:-0.417px;">Embed to .KRA</span></div><div style="left:126px;top:298px;width:17px;height:2px;background:repeating-linear-gradient(90deg,#8a8a8a 0 2px,transparent 2px 3px)"></div><div style="left:1px;top:305.5px;width:67.5px;height:29.5px;background:#414141;border:1px solid #555;border-bottom:none;border-radius:3px 3px 0 0"></div><div style="left:70px;top:303px;width:127.5px;height:33px;background:#494949;border:1px solid #5b5b5b;border-bottom:none;border-radius:3px 3px 0 0"></div><div style="left:0px;top:334.6px;width:70px;height:1px;background:#5b5b5b"></div><div style="left:197px;top:334.6px;width:68px;height:1px;background:#5b5b5b"></div><span class="t" style="left:15.75px;top:314.00px;font-size:14.5px;line-height:14.5px;color:#d2d2d2;letter-spacing:-0.928px;">Layers</span><span class="t" style="left:84.60px;top:313.00px;font-size:14.5px;line-height:14.5px;color:#d2d2d2;letter-spacing:-0.505px;">Grid and Guides</span><svg style="left:1.5px;top:336.8px;width:17px;height:17px;color:#d8d8d8;" viewBox="0 0 17 17" fill="none" stroke="currentColor" stroke-width="1.5"><circle cx="8.5" cy="8.5" r="7.7" stroke-width="1.2"/><path d="M5.6,8.6 V6.4 A2.9,2.9 0 0 1 11.4,6.4 V7" stroke-width="1.2"/><rect x="4.6" y="8.4" width="7.8" height="4.6" fill="currentColor" stroke="none"/></svg><span class="t" style="left:24.50px;top:339.00px;font-size:14.5px;line-height:14.5px;color:#d2d2d2;letter-spacing:-0.505px;">Grid and Guides</span><svg style="left:225.8px;top:338.2px;width:14.5px;height:14px;color:#d8d8d8;" viewBox="0 0 14.5 14" fill="none" stroke="currentColor" stroke-width="1.5"><rect x="4.8" y="0.8" width="8.9" height="7.4" stroke-width="1.5"/><rect x="0.8" y="5.4" width="8.4" height="7.8" stroke-width="1.5" fill="#494949"/></svg><svg style="left:249.8px;top:340px;width:10.5px;height:10.5px;color:#dcdcdc;" viewBox="0 0 10.5 10.5" fill="none" stroke="currentColor" stroke-width="1.5"><path d="M0.6,0.6 L9.9,9.9 M9.9,0.6 L0.6,9.9" stroke-width="1.5"/></svg><div style="left:1.5px;top:388.6px;width:262.5px;height:424.2px;background:#464646;border:1px solid #5a5a5a;border-top-color:#5a5a5a;box-shadow:0 0 0 1px #3e3e3e inset"></div><div style="left:58px;top:359.3px;width:70.3px;height:29.6px;background:#3f3f3f;border:1px solid #555;border-bottom:none;border-radius:3px 3px 0 0"></div><div style="left:2px;top:357px;width:55.3px;height:33px;background:#464646;border:1px solid #5a5a5a;border-bottom:none;border-radius:3px 3px 0 0"></div><span class="t" style="left:16.30px;top:367.00px;font-size:14.5px;line-height:14.5px;color:#d2d2d2;letter-spacing:-0.523px;">Grid</span><span class="t" style="left:72.50px;top:368.00px;font-size:14.5px;line-height:14.5px;color:#d2d2d2;letter-spacing:-0.781px;">Guides</span><div style="left:14px;top:405px;width:17px;height:17px;background:#393939;border:1px solid #3f3f3f"></div><span class="t" style="left:37.20px;top:407.00px;font-size:14.5px;line-height:14.5px;color:#d2d2d2;letter-spacing:-0.475px;">Show grid</span><div style="left:136px;top:405px;width:17px;height:17px;background:#393939;border:1px solid #3f3f3f"></div><svg style="left:136px;top:405px;width:17px;height:17px;color:#c6c6c6;" viewBox="0 0 17 17" fill="none" stroke="currentColor" stroke-width="1.5"><path d="M3.4,8.2 L6.8,13.6 L13.4,3" stroke-width="2"/></svg><span class="t" style="left:159.40px;top:407.00px;font-size:14.5px;line-height:14.5px;color:#d2d2d2;letter-spacing:-0.315px;">Snap to grid</span><span class="t" style="left:14.60px;top:441.00px;font-size:14.5px;line-height:14.5px;color:#d2d2d2;letter-spacing:-1.111px;">Type:</span><div style="left:52.8px;top:434px;width:197.4px;height:26px;background:linear-gradient(#4a4a4a,#4d4d4d);border-radius:3px;border:1px solid #343434;box-shadow:0 1px 0 #555,inset 0 1px 0 #585858"></div><span class="t" style="left:57.60px;top:441.00px;font-size:14.5px;line-height:14.5px;color:#d2d2d2;letter-spacing:-0.765px;">Rectangle</span><svg style="left:232px;top:444px;width:9.6px;height:5.3px;color:#8a8a8a;" viewBox="0 0 9.6 5.3" fill="none" stroke="currentColor" stroke-width="1.5"><path d="M0,0 H9.6 L4.8,5.3 Z" fill="currentColor" stroke="none"/></svg><span class="t" style="left:13.90px;top:476.00px;font-size:14.5px;line-height:14.5px;color:#d2d2d2;letter-spacing:-0.660px;">X spacing:</span><div style="left:93.3px;top:469.5px;width:130.8px;height:25px;background:#383838;border-radius:3px;border:1px solid #303030;box-shadow:0 1px 0 #555"></div><div style="left:207.6px;top:470.5px;width:15.5px;height:23px;background:#4a4a4a;border-left:1px solid #404040;border-radius:0 2px 2px 0"></div><svg style="left:210.85px;top:473.65px;width:10px;height:5px;color:#8e8e8e;" viewBox="0 0 10 5" fill="none" stroke="currentColor" stroke-width="1.5"><path d="M0,5 H10 L5,0 Z" fill="currentColor" stroke="none"/></svg><svg style="left:210.85px;top:485.35px;width:10px;height:5px;color:#8e8e8e;" viewBox="0 0 10 5" fill="none" stroke="currentColor" stroke-width="1.5"><path d="M0,0 H10 L5,5 Z" fill="currentColor" stroke="none"/></svg><span class="t" style="left:96.30px;top:476.00px;font-size:14.5px;line-height:14.5px;color:#d2d2d2;letter-spacing:-0.393px;">64 px</span><span class="t" style="left:13.90px;top:511.00px;font-size:14.5px;line-height:14.5px;color:#d2d2d2;letter-spacing:-0.634px;">Y spacing:</span><div style="left:93.3px;top:504.4px;width:130.8px;height:25px;background:#383838;border-radius:3px;border:1px solid #303030;box-shadow:0 1px 0 #555"></div><div style="left:207.6px;top:505.4px;width:15.5px;height:23px;background:#4a4a4a;border-left:1px solid #404040;border-radius:0 2px 2px 0"></div><svg style="left:210.85px;top:508.55px;width:10px;height:5px;color:#8e8e8e;" viewBox="0 0 10 5" fill="none" stroke="currentColor" stroke-width="1.5"><path d="M0,5 H10 L5,0 Z" fill="currentColor" stroke="none"/></svg><svg style="left:210.85px;top:520.25px;width:10px;height:5px;color:#8e8e8e;" viewBox="0 0 10 5" fill="none" stroke="currentColor" stroke-width="1.5"><path d="M0,0 H10 L5,5 Z" fill="currentColor" stroke="none"/></svg><span class="t" style="left:96.30px;top:511.00px;font-size:14.5px;line-height:14.5px;color:#d2d2d2;letter-spacing:-0.393px;">32 px</span><svg style="left:237.4px;top:487px;width:8px;height:24.5px;color:#dcdcdc;" viewBox="0 0 8 24.5" fill="none" stroke="currentColor" stroke-width="1.5"><path d="M0.8,7.4 V2.4 A1.4,1.4 0 0 1 2.2,1 H5.8 A1.4,1.4 0 0 1 7.2,2.4 V7.4" stroke-width="1.3"/><path d="M4,4.6 V8.6 M2,7 L4,8.8 L6,7" stroke-width="1.2"/><path d="M0.8,17.2 V22.2 A1.4,1.4 0 0 0 2.2,23.6 H5.8 A1.4,1.4 0 0 0 7.2,22.2 V17.2 Z" stroke-width="1.3"/><path d="M4,20 V16 M2,17.6 L4,15.8 L6,17.6" stroke-width="1.2"/></svg><span class="t" style="left:14.30px;top:546.00px;font-size:14.5px;line-height:14.5px;color:#d2d2d2;letter-spacing:-0.540px;">Subdivision:</span><div style="left:93.3px;top:539.5px;width:130.8px;height:25px;background:#383838;border-radius:3px;border:1px solid #303030;box-shadow:0 1px 0 #555"></div><div style="left:207.6px;top:540.5px;width:15.5px;height:23px;background:#4a4a4a;border-left:1px solid #404040;border-radius:0 2px 2px 0"></div><svg style="left:210.85px;top:543.65px;width:10px;height:5px;color:#8e8e8e;" viewBox="0 0 10 5" fill="none" stroke="currentColor" stroke-width="1.5"><path d="M0,5 H10 L5,0 Z" fill="currentColor" stroke="none"/></svg><svg style="left:210.85px;top:555.35px;width:10px;height:5px;color:#8e8e8e;" viewBox="0 0 10 5" fill="none" stroke="currentColor" stroke-width="1.5"><path d="M0,0 H10 L5,5 Z" fill="currentColor" stroke="none"/></svg><span class="t" style="left:96.30px;top:546.00px;font-size:14.5px;line-height:14.5px;color:#d2d2d2;letter-spacing:-0.862px;">2</span><span class="t" style="left:14.60px;top:581.00px;font-size:14.5px;line-height:14.5px;color:#d2d2d2;letter-spacing:-0.483px;">Main Style:</span><div style="left:89px;top:574px;width:76px;height:26px;background:linear-gradient(#4a4a4a,#4d4d4d);border-radius:3px;border:1px solid #343434;box-shadow:0 1px 0 #555,inset 0 1px 0 #585858"></div><span class="t" style="left:93.60px;top:581.00px;font-size:14.5px;line-height:14.5px;color:#d2d2d2;letter-spacing:-0.912px;">Lines</span><svg style="left:146.8px;top:584px;width:9.6px;height:5.3px;color:#8a8a8a;" viewBox="0 0 9.6 5.3" fill="none" stroke="currentColor" stroke-width="1.5"><path d="M0,0 H9.6 L4.8,5.3 Z" fill="currentColor" stroke="none"/></svg><div style="left:173.5px;top:576.3px;width:76.3px;height:21.7px;background:#454545;border:1px solid #333;border-radius:3px;box-shadow:0 1px 0 #575757,inset 0 0 0 1px #4f4f4f"></div><div style="left:178px;top:580px;width:68.6px;height:14.2px;background:#57f907"></div><span class="t" style="left:14.60px;top:616.00px;font-size:14.5px;line-height:14.5px;color:#d2d2d2;letter-spacing:-0.583px;">Div Style:</span><div style="left:89px;top:608.7px;width:76px;height:26px;background:linear-gradient(#4a4a4a,#4d4d4d);border-radius:3px;border:1px solid #343434;box-shadow:0 1px 0 #555,inset 0 1px 0 #585858"></div><span class="t" style="left:93.60px;top:616.00px;font-size:14.5px;line-height:14.5px;color:#d2d2d2;letter-spacing:-0.879px;">Dashed</span><svg style="left:146.8px;top:618.7px;width:9.6px;height:5.3px;color:#8a8a8a;" viewBox="0 0 9.6 5.3" fill="none" stroke="currentColor" stroke-width="1.5"><path d="M0,0 H9.6 L4.8,5.3 Z" fill="currentColor" stroke="none"/></svg><div style="left:173.5px;top:611.3px;width:76.3px;height:21.7px;background:#454545;border:1px solid #333;border-radius:3px;box-shadow:0 1px 0 #575757,inset 0 0 0 1px #4f4f4f"></div><div style="left:177px;top:614.6px;width:69.4px;height:15px;background:#3a3a3a;border:1px solid #404040"></div><div style="left:14px;top:647px;width:17px;height:17px;background:#393939;border:1px solid #3f3f3f"></div><span class="t" style="left:37.30px;top:649.00px;font-size:14.5px;line-height:14.5px;color:#d2d2d2;letter-spacing:-0.293px;">Grid Offset</span><div style="left:269.3px;top:464px;width:2px;height:17px;background:repeating-linear-gradient(180deg,#8a8a8a 0 2px,transparent 2px 3px)"></div><div style="left:273px;top:129.4px;width:1646px;height:36.4px;background:#424242;border:1px solid #5a5a5a;border-radius:3px 3px 0 0;left:1096.5px;width:822.5px"></div><div style="left:273px;top:126.8px;width:823px;height:40px;background:#4a4a4a;border:1px solid #5c5c5c;border-bottom:none;border-radius:3px 3px 0 0"></div><div style="left:1096px;top:165px;width:824px;height:1px;background:#5a5a5a"></div><div style="left:288.8px;top:136.8px;width:16.4px;height:16.4px;border-radius:50%;background:conic-gradient(from 0deg,#ff2cf0 0deg,#ff5aa0 50deg,#ffe23a 110deg,#7dff5a 150deg,#22ffd0 190deg,#22d0ff 230deg,#3c8cff 275deg,#b45cff 320deg,#ff2cf0 360deg)"></div><div style="left:288.8px;top:136.8px;width:16.4px;height:16.4px;border-radius:50%;background:radial-gradient(circle at 50% 50%,rgba(255,255,255,0.55) 0,rgba(255,255,255,0) 60%)"></div><svg style="left:287.3px;top:135.3px;width:19.4px;height:19.4px;color:#d6d6d6;" viewBox="0 0 19.4 19.4" fill="none" stroke="currentColor" stroke-width="1.5"><g transform="scale(1.02105)"><path d="M2.6,3.2 L8.4,8.6 L9.9,7.1 L4.2,1.9 Z" fill="#36423c" stroke="none"/><path d="M8.4,8.6 L9.9,7.1 L11.9,9.1 L10.4,10.6 Z" fill="#cdbfcf" stroke="none"/><path d="M10.4,10.6 L11.9,9.1 C13.5,9.8 14.3,11.5 13.9,13.6 C12.2,13.4 11,12.6 10.4,10.6 Z" fill="#20222a" stroke="none"/></g></svg><span class="t" style="left:570.50px;top:140.00px;font-size:14.5px;line-height:14.5px;color:#d2d2d2;letter-spacing:-0.103px;">structures_512x512.kra (6.9 MiB) *</span><svg style="left:1059.7px;top:140.8px;width:14.6px;height:14.6px;color:#dcdcdc;" viewBox="0 0 14.6 14.6" fill="none" stroke="currentColor" stroke-width="1.5"><path d="M0.6,0.6 L14,14 M14,0.6 L0.6,14" stroke-width="2.5"/></svg><div style="left:1112.8px;top:137.8px;width:16.4px;height:16.4px;border-radius:50%;background:conic-gradient(from 0deg,#ff2cf0 0deg,#ff5aa0 50deg,#ffe23a 110deg,#7dff5a 150deg,#22ffd0 190deg,#22d0ff 230deg,#3c8cff 275deg,#b45cff 320deg,#ff2cf0 360deg)"></div><div style="left:1112.8px;top:137.8px;width:16.4px;height:16.4px;border-radius:50%;background:radial-gradient(circle at 50% 50%,rgba(255,255,255,0.55) 0,rgba(255,255,255,0) 60%)"></div><svg style="left:1111.3px;top:136.3px;width:19.4px;height:19.4px;color:#d6d6d6;" viewBox="0 0 19.4 19.4" fill="none" stroke="currentColor" stroke-width="1.5"><g transform="scale(1.02105)"><path d="M2.6,3.2 L8.4,8.6 L9.9,7.1 L4.2,1.9 Z" fill="#36423c" stroke="none"/><path d="M8.4,8.6 L9.9,7.1 L11.9,9.1 L10.4,10.6 Z" fill="#cdbfcf" stroke="none"/><path d="M10.4,10.6 L11.9,9.1 C13.5,9.8 14.3,11.5 13.9,13.6 C12.2,13.4 11,12.6 10.4,10.6 Z" fill="#20222a" stroke="none"/></g></svg><span class="t" style="left:1406.00px;top:141.00px;font-size:14.5px;line-height:14.5px;color:#d2d2d2;letter-spacing:-0.043px;">inventory_icons.kra (60.4 MiB)</span><svg style="left:1883.6px;top:141.6px;width:14.6px;height:14.6px;color:#dcdcdc;" viewBox="0 0 14.6 14.6" fill="none" stroke="currentColor" stroke-width="1.5"><path d="M0.6,0.6 L14,14 M14,0.6 L0.6,14" stroke-width="2.5"/></svg><div style="left:273px;top:166px;width:1647px;height:22px;background:#404040"></div><div style="left:402px;top:166px;width:1033px;height:22px;background:#363636"></div><div style="left:273px;top:188px;width:21px;height:627px;background:#363636"></div><div style="left:273px;top:166px;width:21px;height:22px;background:#494949"></div><svg style="left:294px;top:166px;width:1626px;height:22px" viewBox="0 0 1626 22" fill="#d0d0d0"><rect x="107.9" y="15.3" width="1.2" height="6.7"/><rect x="132.9" y="18.2" width="1.2" height="3.8"/><rect x="157.9" y="15.3" width="1.2" height="6.7"/><rect x="182.9" y="18.2" width="1.2" height="3.8"/><rect x="207.9" y="15.3" width="1.2" height="6.7"/><rect x="232.9" y="18.2" width="1.2" height="3.8"/><rect x="257.9" y="15.3" width="1.2" height="6.7"/><rect x="282.9" y="18.2" width="1.2" height="3.8"/><rect x="307.9" y="15.3" width="1.2" height="6.7"/><rect x="332.9" y="18.2" width="1.2" height="3.8"/><rect x="357.9" y="15.3" width="1.2" height="6.7"/><rect x="382.9" y="18.2" width="1.2" height="3.8"/><rect x="407.9" y="15.3" width="1.2" height="6.7"/><rect x="432.9" y="18.2" width="1.2" height="3.8"/><rect x="457.9" y="15.3" width="1.2" height="6.7"/><rect x="482.9" y="18.2" width="1.2" height="3.8"/><rect x="507.9" y="15.3" width="1.2" height="6.7"/><rect x="532.9" y="18.2" width="1.2" height="3.8"/><rect x="557.9" y="15.3" width="1.2" height="6.7"/><rect x="582.9" y="18.2" width="1.2" height="3.8"/><rect x="607.9" y="15.3" width="1.2" height="6.7"/><rect x="632.9" y="18.2" width="1.2" height="3.8"/><rect x="657.9" y="15.3" width="1.2" height="6.7"/><rect x="682.9" y="18.2" width="1.2" height="3.8"/><rect x="707.9" y="15.3" width="1.2" height="6.7"/><rect x="732.9" y="18.2" width="1.2" height="3.8"/><rect x="757.9" y="15.3" width="1.2" height="6.7"/><rect x="782.9" y="18.2" width="1.2" height="3.8"/><rect x="807.9" y="15.3" width="1.2" height="6.7"/><rect x="832.9" y="18.2" width="1.2" height="3.8"/><rect x="857.9" y="15.3" width="1.2" height="6.7"/><rect x="882.9" y="18.2" width="1.2" height="3.8"/><rect x="907.9" y="15.3" width="1.2" height="6.7"/><rect x="932.9" y="18.2" width="1.2" height="3.8"/><rect x="957.9" y="15.3" width="1.2" height="6.7"/><rect x="982.9" y="18.2" width="1.2" height="3.8"/><rect x="1007.9" y="15.3" width="1.2" height="6.7"/><rect x="1032.9" y="18.2" width="1.2" height="3.8"/><rect x="1057.9" y="15.3" width="1.2" height="6.7"/><rect x="1082.9" y="18.2" width="1.2" height="3.8"/><rect x="1107.9" y="15.3" width="1.2" height="6.7"/><rect x="1132.9" y="18.2" width="1.2" height="3.8"/></svg><span class="t" style="left:398.76px;top:170.00px;font-size:12px;line-height:12px;color:#d8d8d8;">0</span><span class="t" style="left:495.42px;top:170.00px;font-size:12px;line-height:12px;color:#d8d8d8;">50</span><span class="t" style="left:592.09px;top:170.00px;font-size:12px;line-height:12px;color:#d8d8d8;">100</span><span class="t" style="left:692.09px;top:170.00px;font-size:12px;line-height:12px;color:#d8d8d8;">150</span><span class="t" style="left:792.09px;top:170.00px;font-size:12px;line-height:12px;color:#d8d8d8;">200</span><span class="t" style="left:892.09px;top:170.00px;font-size:12px;line-height:12px;color:#d8d8d8;">250</span><span class="t" style="left:992.09px;top:170.00px;font-size:12px;line-height:12px;color:#d8d8d8;">300</span><span class="t" style="left:1092.09px;top:170.00px;font-size:12px;line-height:12px;color:#d8d8d8;">350</span><span class="t" style="left:1192.09px;top:170.00px;font-size:12px;line-height:12px;color:#d8d8d8;">400</span><span class="t" style="left:1292.09px;top:170.00px;font-size:12px;line-height:12px;color:#d8d8d8;">450</span><span class="t" style="left:1392.09px;top:170.00px;font-size:12px;line-height:12px;color:#d8d8d8;">500</span><svg style="left:273px;top:188px;width:21px;height:627px" viewBox="0 0 21 627" fill="#d0d0d0"><rect x="14.2" y="6.9" width="6.8" height="1.2"/><rect x="17" y="31.9" width="3.3" height="1.2"/><rect x="14.2" y="56.9" width="6.8" height="1.2"/><rect x="17" y="81.9" width="3.3" height="1.2"/><rect x="14.2" y="106.9" width="6.8" height="1.2"/><rect x="17" y="131.9" width="3.3" height="1.2"/><rect x="14.2" y="156.9" width="6.8" height="1.2"/><rect x="17" y="181.9" width="3.3" height="1.2"/><rect x="14.2" y="206.9" width="6.8" height="1.2"/><rect x="17" y="231.9" width="3.3" height="1.2"/><rect x="14.2" y="256.9" width="6.8" height="1.2"/><rect x="17" y="281.9" width="3.3" height="1.2"/><rect x="14.2" y="306.9" width="6.8" height="1.2"/><rect x="17" y="331.9" width="3.3" height="1.2"/><rect x="14.2" y="356.9" width="6.8" height="1.2"/><rect x="17" y="381.9" width="3.3" height="1.2"/><rect x="14.2" y="406.9" width="6.8" height="1.2"/><rect x="17" y="431.9" width="3.3" height="1.2"/><rect x="14.2" y="456.9" width="6.8" height="1.2"/><rect x="17" y="481.9" width="3.3" height="1.2"/><rect x="14.2" y="506.9" width="6.8" height="1.2"/><rect x="17" y="531.9" width="3.3" height="1.2"/><rect x="14.2" y="556.9" width="6.8" height="1.2"/><rect x="17" y="581.9" width="3.3" height="1.2"/><rect x="14.2" y="606.9" width="6.8" height="1.2"/></svg><span class="t" style="left:275.9px;top:201.876px;font-size:12px;line-height:12px;color:#d8d8d8;transform-origin:0 0;transform:rotate(-90deg) scaleY(1.2)">50</span><span class="t" style="left:275.9px;top:305.214px;font-size:12px;line-height:12px;color:#d8d8d8;transform-origin:0 0;transform:rotate(-90deg) scaleY(1.2)">100</span><span class="t" style="left:275.9px;top:405.214px;font-size:12px;line-height:12px;color:#d8d8d8;transform-origin:0 0;transform:rotate(-90deg) scaleY(1.2)">150</span><span class="t" style="left:275.9px;top:505.214px;font-size:12px;line-height:12px;color:#d8d8d8;transform-origin:0 0;transform:rotate(-90deg) scaleY(1.2)">200</span><span class="t" style="left:275.9px;top:605.214px;font-size:12px;line-height:12px;color:#d8d8d8;transform-origin:0 0;transform:rotate(-90deg) scaleY(1.2)">250</span><span class="t" style="left:275.9px;top:705.214px;font-size:12px;line-height:12px;color:#d8d8d8;transform-origin:0 0;transform:rotate(-90deg) scaleY(1.2)">300</span><span class="t" style="left:275.9px;top:805.214px;font-size:12px;line-height:12px;color:#d8d8d8;transform-origin:0 0;transform:rotate(-90deg) scaleY(1.2)">350</span><div style="left:273px;top:610.8px;width:20.6px;height:1.2px;background:#dcdcdc"></div><div style="left:1903px;top:188px;width:17px;height:611px;background:#3f3f3f"></div><div style="left:1903.5px;top:188px;width:16.5px;height:15.6px;background:#484848;border:1px solid #575757"></div><svg style="left:1906.4px;top:193.2px;width:10.8px;height:5.6px;color:#b4b4b4;" viewBox="0 0 10.8 5.6" fill="none" stroke="currentColor" stroke-width="1.5"><path d="M0,5.6 H10.8 L5.4,0 Z" fill="currentColor" stroke="none"/></svg><div style="left:1903.5px;top:782.6px;width:16.5px;height:15.6px;background:#484848;border:1px solid #575757"></div><svg style="left:1906.4px;top:788px;width:10.8px;height:5.6px;color:#b4b4b4;" viewBox="0 0 10.8 5.6" fill="none" stroke="currentColor" stroke-width="1.5"><path d="M0,0 H10.8 L5.4,5.6 Z" fill="currentColor" stroke="none"/></svg><div style="left:1904px;top:373px;width:16px;height:112px;background:#4a4a4a;border:1px solid #606060"></div><div style="left:294px;top:799px;width:1609px;height:16.5px;background:#404040"></div><div style="left:294px;top:799.6px;width:16px;height:15.6px;background:#484848;border:1px solid #575757"></div><svg style="left:299px;top:802.2px;width:5.8px;height:10.6px;color:#b4b4b4;" viewBox="0 0 5.8 10.6" fill="none" stroke="currentColor" stroke-width="1.5"><path d="M5.8,0 V10.6 L0,5.3 Z" fill="currentColor" stroke="none"/></svg><div style="left:1887px;top:799.6px;width:16px;height:15.6px;background:#484848;border:1px solid #575757"></div><svg style="left:1892.2px;top:802.2px;width:5.8px;height:10.6px;color:#b4b4b4;" viewBox="0 0 5.8 10.6" fill="none" stroke="currentColor" stroke-width="1.5"><path d="M0,0 V10.6 L5.8,5.3 Z" fill="currentColor" stroke="none"/></svg><div style="left:1383px;top:800px;width:313px;height:15.6px;background:#4a4a4a;border:1px solid #606060"></div><div style="left:1903px;top:799px;width:17px;height:17px;background:#494949"></div><div style="left:953px;top:819.5px;width:17px;height:2px;background:repeating-linear-gradient(90deg,#8a8a8a 0 2px,transparent 2px 3px)"></div><span class="t" style="left:11.40px;top:833.00px;font-size:14.5px;line-height:14.5px;color:#d2d2d2;letter-spacing:-0.327px;">Animation Timeline</span><svg style="left:167.7px;top:829.6px;width:15px;height:16.4px;color:#dcdcdc;" viewBox="0 0 15 16.4" fill="none" stroke="currentColor" stroke-width="1.5"><rect x="0" y="0" width="2.4" height="16.4" fill="currentColor" stroke="none"/><path d="M10.6,0.2 V16.2 L2.9,8.2 Z" fill="currentColor" stroke="none"/><rect x="12.3" y="0" width="2" height="16.4" fill="currentColor" stroke="none"/></svg><svg style="left:199.8px;top:829.6px;width:11.6px;height:16.4px;color:#dcdcdc;" viewBox="0 0 11.6 16.4" fill="none" stroke="currentColor" stroke-width="1.5"><path d="M8,0.2 V16.2 L0,8.2 Z" fill="currentColor" stroke="none"/><rect x="9.2" y="0" width="2" height="16.4" fill="currentColor" stroke="none"/></svg><div style="left:229px;top:832.2px;width:12px;height:11.8px;background:#dcdcdc"></div><svg style="left:260.6px;top:829.8px;width:8.8px;height:16.2px;color:#dcdcdc;" viewBox="0 0 8.8 16.2" fill="none" stroke="currentColor" stroke-width="1.5"><path d="M0,0 V16.2 L8.8,8.1 Z" fill="currentColor" stroke="none"/></svg><svg style="left:289.6px;top:829.6px;width:11.6px;height:16.4px;color:#dcdcdc;" viewBox="0 0 11.6 16.4" fill="none" stroke="currentColor" stroke-width="1.5"><rect x="0" y="0" width="2.3" height="16.4" fill="currentColor" stroke="none"/><path d="M3.4,0.2 V16.2 L11.6,8.2 Z" fill="currentColor" stroke="none"/></svg><svg style="left:317.7px;top:829.6px;width:14.8px;height:16.4px;color:#dcdcdc;" viewBox="0 0 14.8 16.4" fill="none" stroke="currentColor" stroke-width="1.5"><rect x="0" y="0" width="2.3" height="16.4" fill="currentColor" stroke="none"/><path d="M3.4,0.2 V16.2 L12,8.2 Z" fill="currentColor" stroke="none"/><rect x="12.5" y="2.2" width="2.2" height="12.4" fill="currentColor" stroke="none"/></svg><div style="left:356.3px;top:826.8px;width:78.8px;height:24.6px;background:#383838;border-radius:3px;border:1px solid #303030;box-shadow:0 1px 0 #555"></div><div style="left:418.6px;top:827.8px;width:15.5px;height:22.6px;background:#4a4a4a;border-left:1px solid #404040;border-radius:0 2px 2px 0"></div><svg style="left:421.85px;top:830.85px;width:10px;height:5px;color:#8e8e8e;" viewBox="0 0 10 5" fill="none" stroke="currentColor" stroke-width="1.5"><path d="M0,5 H10 L5,0 Z" fill="currentColor" stroke="none"/></svg><svg style="left:421.85px;top:842.35px;width:10px;height:5px;color:#8e8e8e;" viewBox="0 0 10 5" fill="none" stroke="currentColor" stroke-width="1.5"><path d="M0,0 H10 L5,5 Z" fill="currentColor" stroke="none"/></svg><span class="t" style="left:359.40px;top:833.00px;font-size:14.5px;line-height:14.5px;color:#d2d2d2;letter-spacing:-0.320px;">#  3</span><div style="left:452.5px;top:825px;width:29px;height:27px;background:#474747;border:1px solid #333;border-radius:3px;box-shadow:inset 0 0 0 1px #525252"></div><svg style="left:457.5px;top:829.5px;width:19px;height:16.5px;color:#dcdcdc;" viewBox="0 0 19 16.5" fill="none" stroke="currentColor" stroke-width="1.5"><path d="M1,2.6 H15.4 M18,5 V13.2 H5 M1,2.6 V13.2 H3" stroke-width="1.5"/><path d="M14.4,3.4 L18.6,0.6" stroke-width="1.3"/><path d="M3.6,13.2 L1.8,16" stroke-width="1.2"/><path d="M1,4.4 H2.6 M1,7 H2.6 M1,9.6 H2.6 M16.4,6.4 H18 M16.4,9 H18 M16.4,11.4 H18" stroke-width="1" stroke="#494949"/><path d="M7.6,5 V11 L12.2,8 Z" fill="currentColor" stroke="none"/></svg><div style="left:483px;top:826.8px;width:113.3px;height:24.6px;background:#3b3b3b;border-radius:3px;border:1px solid #2f2f2f;box-shadow:0 1px 0 #545454"></div><div style="left:484px;top:827.8px;width:40px;height:22.6px;background:#54769a"></div><div style="left:580px;top:827.8px;width:15.3px;height:22.6px;background:#4b4b4b;border-left:1px solid #3a3a3a;border-radius:0 2px 2px 0"></div><svg style="left:583.15px;top:830.85px;width:10px;height:5px;color:#8e8e8e;" viewBox="0 0 10 5" fill="none" stroke="currentColor" stroke-width="1.5"><path d="M0,5 H10 L5,0 Z" fill="currentColor" stroke="none"/></svg><svg style="left:583.15px;top:842.35px;width:10px;height:5px;color:#8e8e8e;" viewBox="0 0 10 5" fill="none" stroke="currentColor" stroke-width="1.5"><path d="M0,0 H10 L5,5 Z" fill="currentColor" stroke="none"/></svg><span class="t" style="left:489.30px;top:833.00px;font-size:14.5px;line-height:14.5px;color:#e6e6e6;letter-spacing:-0.715px;">Speed: 100 %</span><svg style="left:618.75px;top:831.25px;width:18.4px;height:12.6px;color:#dcdcdc;" viewBox="0 0 18.4 12.6" fill="none" stroke="currentColor" stroke-width="1.5"><path d="M1,1 H17.4 V11.6 H1 Z" stroke-width="1.6"/><path d="M3.4,1 V11.6 M15,1 V11.6" stroke-width="0.9"/></svg><svg style="left:647.5px;top:829.5px;width:20.6px;height:15.6px;color:#dcdcdc;" viewBox="0 0 20.6 15.6" fill="none" stroke="currentColor" stroke-width="1.5"><path d="M5.6,3.6 V0.8 H19.8 V10.2 H17" stroke-width="1.5"/><path d="M3,6.4 V3.6 H17 V12.6 H14.4" stroke-width="1.5"/><rect x="0.8" y="6.4" width="13.6" height="8.4" stroke-width="1.5" fill="#494949"/><path d="M2.8,6.4 V14.8 M12.4,6.4 V14.8" stroke-width="0.9"/></svg><svg style="left:678.75px;top:829px;width:19px;height:17px;color:#dcdcdc;" viewBox="0 0 19 17" fill="none" stroke="currentColor" stroke-width="1.5"><path d="M1,3.4 H17.6 V14.4 H1 Z" stroke-width="1.6"/><path d="M3.4,3.4 V14.4 M15.2,3.4 V14.4" stroke-width="0.9"/><path d="M2,16.4 L17,0.6" stroke-width="1.5"/></svg><svg style="left:1726px;top:828.6px;width:19.6px;height:19.6px;color:#dcdcdc;" viewBox="0 0 19.6 19.6" fill="none" stroke="currentColor" stroke-width="1.5"><path d="M10.6,0.2 C11.4,5 19.2,8.4 19.2,13.8 C19.2,17 16.6,19.3 13.2,19.3 C9.4,19.3 7,16.6 7.2,13.2 C7.4,9 10,5 10.6,0.2 Z" fill="currentColor" stroke="none"/><path d="M10.4,3.4 C9.6,8 10.4,14 13.4,19" stroke="#494949" stroke-width="1.2"/><path d="M11.8,5.4 C13,9.6 15.2,14 16.8,17.6" stroke="#494949" stroke-width="1.2"/><path d="M8.4,3.4 C5,7.6 3.4,11.4 4,14.8 C4.4,16.8 5.6,18.2 7.4,19" stroke-width="1.6"/><path d="M5,6.4 C2,9.6 0.6,12.4 1,15.2 C1.2,16.8 2.2,18.2 3.6,19" stroke-width="1.5"/></svg><svg style="left:1757.5px;top:829.8px;width:10.4px;height:17px;color:#dcdcdc;" viewBox="0 0 10.4 17" fill="none" stroke="currentColor" stroke-width="1.5"><path d="M0.2,5.6 H2.4 V11.4 H0.2 Z" fill="currentColor" stroke="none"/><path d="M3.4,5.6 L10.2,0.2 V16.8 L3.4,11.4 Z" fill="currentColor" stroke="none"/></svg><svg style="left:1770px;top:844px;width:8.8px;height:4.8px;color:#9a9a9a;" viewBox="0 0 8.8 4.8" fill="none" stroke="currentColor" stroke-width="1.5"><path d="M0,0 H8.8 L4.4,4.8 Z" fill="currentColor" stroke="none"/></svg><svg style="left:1787px;top:830px;width:18px;height:15px;color:#dcdcdc;" viewBox="0 0 18 15" fill="none" stroke="currentColor" stroke-width="1.5"><path d="M0,1.4 H18 M0,7.5 H18 M0,13.6 H18" stroke-width="2.7"/></svg><svg style="left:1800px;top:844px;width:8.8px;height:4.8px;color:#9a9a9a;" viewBox="0 0 8.8 4.8" fill="none" stroke="currentColor" stroke-width="1.5"><path d="M0,0 H8.8 L4.4,4.8 Z" fill="currentColor" stroke="none"/></svg><svg style="left:1850px;top:829.5px;width:18px;height:17.5px;color:#c4c4c4;" viewBox="0 0 18 17.5" fill="none" stroke="currentColor" stroke-width="1.5"><rect x="6" y="0.9" width="11.1" height="9.6" stroke-width="1.7"/><rect x="0.9" y="6.8" width="10.6" height="9.8" stroke-width="1.7" fill="#494949"/></svg><svg style="left:1886px;top:832px;width:12.6px;height:12.6px;color:#dcdcdc;" viewBox="0 0 12.6 12.6" fill="none" stroke="currentColor" stroke-width="1.5"><path d="M0.6,0.6 L12,12 M12,0.6 L0.6,12" stroke-width="1.7"/></svg><div style="left:0px;top:855px;width:1903px;height:123px;background:#373737"></div><div style="left:175px;top:855px;width:1728px;height:29px;background:#333333"></div><div style="left:175px;top:876px;width:1728px;height:102px;background:repeating-linear-gradient(90deg,transparent 0 21px,#3b3b3b 21px 22px)"></div><div style="left:175px;top:884px;width:1728px;height:24px;background:rgba(75,105,140,0.15)"></div><div style="left:175px;top:907.5px;width:1728px;height:1px;background:#3b3b3b"></div><div style="left:175px;top:931.5px;width:1728px;height:1px;background:#3b3b3b"></div><div style="left:175px;top:955.5px;width:1728px;height:1px;background:#3b3b3b"></div><div style="left:1px;top:856px;width:174px;height:122px;background:#3a3a3a"></div><div style="left:1px;top:856px;width:174px;height:1px;background:#505050"></div><div style="left:1px;top:931.3px;width:174px;height:1.4px;background:#464646"></div><div style="left:1px;top:955.3px;width:174px;height:1.4px;background:#464646"></div><div style="left:1px;top:884px;width:174px;height:2.2px;background:#52789f"></div><div style="left:1px;top:905.4px;width:174px;height:2.2px;background:#52789f"></div><svg style="left:8px;top:863px;width:17px;height:17px;color:#dcdcdc;" viewBox="0 0 17 17" fill="none" stroke="currentColor" stroke-width="1.5"><path d="M7.2,0 V16.4 M0,8 H14.6" stroke-width="1.7"/><path d="M9.6,12 H16.8 L13.2,16.4 Z" fill="#8c8c8c" stroke="none"/></svg><svg style="left:151.6px;top:862.8px;width:17px;height:16.6px;color:#e0e0e0;" viewBox="0 0 17 16.6" fill="none" stroke="currentColor" stroke-width="1.5"><rect x="0.7" y="0.7" width="15.6" height="15.2" stroke-width="1.2"/><path d="M3.6,8.3 H13.4" stroke-width="1.7"/><path d="M1.2,8.3 L5.4,4.6 V12 Z M15.8,8.3 L11.6,4.6 V12 Z" fill="currentColor" stroke="none"/><rect x="0.2" y="0.2" width="16.6" height="16.2" stroke-width="0"/></svg><span class="t" style="left:177.40px;top:860.00px;font-size:13.5px;line-height:13.5px;color:#d6d6d6;">0</span><span class="t" style="left:243.40px;top:860.00px;font-size:13.5px;line-height:13.5px;color:#d6d6d6;">3</span><span class="t" style="left:309.40px;top:860.00px;font-size:13.5px;line-height:13.5px;color:#d6d6d6;">6</span><span class="t" style="left:375.40px;top:860.00px;font-size:13.5px;line-height:13.5px;color:#d6d6d6;">9</span><span class="t" style="left:441.40px;top:860.00px;font-size:13.5px;line-height:13.5px;color:#d6d6d6;">12</span><span class="t" style="left:507.40px;top:860.00px;font-size:13.5px;line-height:13.5px;color:#d6d6d6;">15</span><span class="t" style="left:573.40px;top:860.00px;font-size:13.5px;line-height:13.5px;color:#d6d6d6;">18</span><span class="t" style="left:639.40px;top:860.00px;font-size:13.5px;line-height:13.5px;color:#d6d6d6;">21</span><span class="t" style="left:705.40px;top:860.00px;font-size:13.5px;line-height:13.5px;color:#d6d6d6;">24</span><span class="t" style="left:771.40px;top:860.00px;font-size:13.5px;line-height:13.5px;color:#d6d6d6;">27</span><span class="t" style="left:837.40px;top:860.00px;font-size:13.5px;line-height:13.5px;color:#d6d6d6;">30</span><span class="t" style="left:903.40px;top:860.00px;font-size:13.5px;line-height:13.5px;color:#d6d6d6;">33</span><span class="t" style="left:969.40px;top:860.00px;font-size:13.5px;line-height:13.5px;color:#d6d6d6;">36</span><span class="t" style="left:1035.40px;top:860.00px;font-size:13.5px;line-height:13.5px;color:#d6d6d6;">39</span><span class="t" style="left:1101.40px;top:860.00px;font-size:13.5px;line-height:13.5px;color:#d6d6d6;">42</span><span class="t" style="left:1167.40px;top:860.00px;font-size:13.5px;line-height:13.5px;color:#d6d6d6;">45</span><span class="t" style="left:1233.40px;top:860.00px;font-size:13.5px;line-height:13.5px;color:#d6d6d6;">48</span><span class="t" style="left:1299.40px;top:860.00px;font-size:13.5px;line-height:13.5px;color:#d6d6d6;">51</span><span class="t" style="left:1365.40px;top:860.00px;font-size:13.5px;line-height:13.5px;color:#d6d6d6;">54</span><span class="t" style="left:1431.40px;top:860.00px;font-size:13.5px;line-height:13.5px;color:#d6d6d6;">57</span><span class="t" style="left:1497.40px;top:860.00px;font-size:13.5px;line-height:13.5px;color:#d6d6d6;">60</span><span class="t" style="left:1563.40px;top:860.00px;font-size:13.5px;line-height:13.5px;color:#d6d6d6;">63</span><span class="t" style="left:1629.40px;top:860.00px;font-size:13.5px;line-height:13.5px;color:#d6d6d6;">66</span><span class="t" style="left:1695.40px;top:860.00px;font-size:13.5px;line-height:13.5px;color:#d6d6d6;">69</span><span class="t" style="left:1761.40px;top:860.00px;font-size:13.5px;line-height:13.5px;color:#d6d6d6;">72</span><span class="t" style="left:1827.40px;top:860.00px;font-size:13.5px;line-height:13.5px;color:#d6d6d6;">75</span><div style="left:1880px;top:858px;width:22px;height:20px;overflow:hidden"><span class="t" style="left:13.40px;top:2.00px;font-size:13.5px;line-height:13.5px;color:#d6d6d6;">78</span></div><svg style="left:6.4px;top:891.9px;width:9.6px;height:9.4px;color:#dcdcdc;" viewBox="0 0 9.6 9.4" fill="none" stroke="currentColor" stroke-width="1.5"><path d="M5.4,0.2 L9.4,3.8 L8.2,4.8 L7.6,4.4 L6,6 C6.2,6.8 6,7.4 5.4,8 L1.8,4.4 C2.4,3.8 3,3.6 3.8,3.8 L5.4,2.2 L4.8,1.2 Z" fill="currentColor" stroke="none"/><path d="M3.4,6.2 L0.2,9.2" stroke-width="1.2"/></svg><span class="t" style="left:21.60px;top:890.00px;font-size:14.5px;line-height:14.5px;color:#d2d2d2;letter-spacing:-0.530px;">High</span><svg style="left:103.6px;top:889.3px;width:15px;height:14px;color:#dedede;" viewBox="0 0 15 14" fill="none" stroke="currentColor" stroke-width="1.5"><path d="M0.4,7 C3,2 12,2 14.6,7 C12,12.6 3,12.6 0.4,7 Z" fill="#4a4a4a" stroke="none"/><path d="M0.4,6.8 C2.6,0.6 12.4,0.6 14.6,6.8" stroke-width="1.6"/><path d="M0.8,8.6 C3.4,13.6 11.6,13.6 14.2,8.6" stroke-width="1.1" stroke="#bdbdbd"/><circle cx="7.5" cy="5.6" r="3.4" fill="currentColor" stroke="none"/></svg><svg style="left:123.6px;top:889.5px;width:13px;height:13.4px;color:#7a7a7a;" viewBox="0 0 13 13.4" fill="none" stroke="currentColor" stroke-width="1.5"><rect x="0" y="5.6" width="12.8" height="7.8" fill="currentColor" stroke="none"/><path d="M6.2,2.8 C7.6,0.2 11.6,0.8 11.6,4 V6" stroke-width="2.1"/></svg><span class="t" style="left:139.6px;top:883.7px;font-size:21px;line-height:21px;color:#7a7a7a;font-style:italic;font-family:'DejaVu Sans',sans-serif">α</span><svg style="left:158.2px;top:889.2px;width:15px;height:15px" viewBox="0 0 15 15"><rect x="0" y="0" width="5" height="5" fill="#5e5e5e"/><rect x="5" y="0" width="5" height="5" fill="#7e7e7e"/><rect x="10" y="0" width="5" height="5" fill="#5e5e5e"/><rect x="0" y="5" width="5" height="5" fill="#7e7e7e"/><rect x="5" y="5" width="5" height="5" fill="#5e5e5e"/><rect x="10" y="5" width="5" height="5" fill="#7e7e7e"/><rect x="0" y="10" width="5" height="5" fill="#5e5e5e"/><rect x="5" y="10" width="5" height="5" fill="#7e7e7e"/><rect x="10" y="10" width="5" height="5" fill="#5e5e5e"/></svg><svg style="left:6.4px;top:915.9px;width:9.6px;height:9.4px;color:#dcdcdc;" viewBox="0 0 9.6 9.4" fill="none" stroke="currentColor" stroke-width="1.5"><path d="M5.4,0.2 L9.4,3.8 L8.2,4.8 L7.6,4.4 L6,6 C6.2,6.8 6,7.4 5.4,8 L1.8,4.4 C2.4,3.8 3,3.6 3.8,3.8 L5.4,2.2 L4.8,1.2 Z" fill="currentColor" stroke="none"/><path d="M3.4,6.2 L0.2,9.2" stroke-width="1.2"/></svg><span class="t" style="left:21.60px;top:914.00px;font-size:14.5px;line-height:14.5px;color:#d2d2d2;letter-spacing:-0.254px;">Mid</span><svg style="left:103.6px;top:913.3px;width:15px;height:14px;color:#dedede;" viewBox="0 0 15 14" fill="none" stroke="currentColor" stroke-width="1.5"><path d="M0.4,7 C3,2 12,2 14.6,7 C12,12.6 3,12.6 0.4,7 Z" fill="#4a4a4a" stroke="none"/><path d="M0.4,6.8 C2.6,0.6 12.4,0.6 14.6,6.8" stroke-width="1.6"/><path d="M0.8,8.6 C3.4,13.6 11.6,13.6 14.2,8.6" stroke-width="1.1" stroke="#bdbdbd"/><circle cx="7.5" cy="5.6" r="3.4" fill="currentColor" stroke="none"/></svg><svg style="left:123.6px;top:913.5px;width:13px;height:13.4px;color:#7a7a7a;" viewBox="0 0 13 13.4" fill="none" stroke="currentColor" stroke-width="1.5"><rect x="0" y="5.6" width="12.8" height="7.8" fill="currentColor" stroke="none"/><path d="M6.2,2.8 C7.6,0.2 11.6,0.8 11.6,4 V6" stroke-width="2.1"/></svg><span class="t" style="left:139.6px;top:907.7px;font-size:21px;line-height:21px;color:#7a7a7a;font-style:italic;font-family:'DejaVu Sans',sans-serif">α</span><svg style="left:158.2px;top:913.2px;width:15px;height:15px" viewBox="0 0 15 15"><rect x="0" y="0" width="5" height="5" fill="#5e5e5e"/><rect x="5" y="0" width="5" height="5" fill="#7e7e7e"/><rect x="10" y="0" width="5" height="5" fill="#5e5e5e"/><rect x="0" y="5" width="5" height="5" fill="#7e7e7e"/><rect x="5" y="5" width="5" height="5" fill="#5e5e5e"/><rect x="10" y="5" width="5" height="5" fill="#7e7e7e"/><rect x="0" y="10" width="5" height="5" fill="#5e5e5e"/><rect x="5" y="10" width="5" height="5" fill="#7e7e7e"/><rect x="10" y="10" width="5" height="5" fill="#5e5e5e"/></svg><svg style="left:6.4px;top:939.9px;width:9.6px;height:9.4px;color:#dcdcdc;" viewBox="0 0 9.6 9.4" fill="none" stroke="currentColor" stroke-width="1.5"><path d="M5.4,0.2 L9.4,3.8 L8.2,4.8 L7.6,4.4 L6,6 C6.2,6.8 6,7.4 5.4,8 L1.8,4.4 C2.4,3.8 3,3.6 3.8,3.8 L5.4,2.2 L4.8,1.2 Z" fill="currentColor" stroke="none"/><path d="M3.4,6.2 L0.2,9.2" stroke-width="1.2"/></svg><span class="t" style="left:21.60px;top:938.00px;font-size:14.5px;line-height:14.5px;color:#d2d2d2;letter-spacing:-1.091px;">Black</span><svg style="left:103.6px;top:937.3px;width:15px;height:14px;color:#dedede;" viewBox="0 0 15 14" fill="none" stroke="currentColor" stroke-width="1.5"><path d="M0.4,7 C3,2 12,2 14.6,7 C12,12.6 3,12.6 0.4,7 Z" fill="#4a4a4a" stroke="none"/><path d="M0.4,6.8 C2.6,0.6 12.4,0.6 14.6,6.8" stroke-width="1.6"/><path d="M0.8,8.6 C3.4,13.6 11.6,13.6 14.2,8.6" stroke-width="1.1" stroke="#bdbdbd"/><circle cx="7.5" cy="5.6" r="3.4" fill="currentColor" stroke="none"/></svg><svg style="left:123.6px;top:937.5px;width:13px;height:13.4px;color:#7a7a7a;" viewBox="0 0 13 13.4" fill="none" stroke="currentColor" stroke-width="1.5"><rect x="0" y="5.6" width="12.8" height="7.8" fill="currentColor" stroke="none"/><path d="M6.2,2.8 C7.6,0.2 11.6,0.8 11.6,4 V6" stroke-width="2.1"/></svg><span class="t" style="left:139.6px;top:931.7px;font-size:21px;line-height:21px;color:#7a7a7a;font-style:italic;font-family:'DejaVu Sans',sans-serif">α</span><svg style="left:158.2px;top:937.2px;width:15px;height:15px" viewBox="0 0 15 15"><rect x="0" y="0" width="5" height="5" fill="#5e5e5e"/><rect x="5" y="0" width="5" height="5" fill="#7e7e7e"/><rect x="10" y="0" width="5" height="5" fill="#5e5e5e"/><rect x="0" y="5" width="5" height="5" fill="#7e7e7e"/><rect x="5" y="5" width="5" height="5" fill="#5e5e5e"/><rect x="10" y="5" width="5" height="5" fill="#7e7e7e"/><rect x="0" y="10" width="5" height="5" fill="#5e5e5e"/><rect x="5" y="10" width="5" height="5" fill="#7e7e7e"/><rect x="10" y="10" width="5" height="5" fill="#5e5e5e"/></svg><svg style="left:6.4px;top:963.7px;width:9.6px;height:9.4px;color:#dcdcdc;" viewBox="0 0 9.6 9.4" fill="none" stroke="currentColor" stroke-width="1.5"><path d="M5.4,0.2 L9.4,3.8 L8.2,4.8 L7.6,4.4 L6,6 C6.2,6.8 6,7.4 5.4,8 L1.8,4.4 C2.4,3.8 3,3.6 3.8,3.8 L5.4,2.2 L4.8,1.2 Z" fill="currentColor" stroke="none"/><path d="M3.4,6.2 L0.2,9.2" stroke-width="1.2"/></svg><span class="t" style="left:21.60px;top:962.00px;font-size:14.5px;line-height:14.5px;color:#d2d2d2;letter-spacing:-0.966px;">Reference</span><svg style="left:103.6px;top:961.1px;width:15px;height:14px;color:#777;" viewBox="0 0 15 14" fill="none" stroke="currentColor" stroke-width="1.5"><path d="M0.6,6 C3,1.2 12,1.2 14.4,6" stroke-width="0.9" stroke="#6e6e6e"/><path d="M0.8,8.6 C3.4,13.4 11.6,13.4 14.2,8.6" stroke-width="1.1" stroke="#767676"/></svg><svg style="left:123.6px;top:961.3px;width:13px;height:13.4px;color:#7a7a7a;" viewBox="0 0 13 13.4" fill="none" stroke="currentColor" stroke-width="1.5"><rect x="0" y="5.6" width="12.8" height="7.8" fill="currentColor" stroke="none"/><path d="M6.2,2.8 C7.6,0.2 11.6,0.8 11.6,4 V6" stroke-width="2.1"/></svg><span class="t" style="left:139.6px;top:955.5px;font-size:21px;line-height:21px;color:#7a7a7a;font-style:italic;font-family:'DejaVu Sans',sans-serif">α</span><svg style="left:158.2px;top:961px;width:15px;height:15px" viewBox="0 0 15 15"><rect x="0" y="0" width="5" height="5" fill="#5e5e5e"/><rect x="5" y="0" width="5" height="5" fill="#7e7e7e"/><rect x="10" y="0" width="5" height="5" fill="#5e5e5e"/><rect x="0" y="5" width="5" height="5" fill="#7e7e7e"/><rect x="5" y="5" width="5" height="5" fill="#5e5e5e"/><rect x="10" y="5" width="5" height="5" fill="#7e7e7e"/><rect x="0" y="10" width="5" height="5" fill="#5e5e5e"/><rect x="5" y="10" width="5" height="5" fill="#7e7e7e"/><rect x="10" y="10" width="5" height="5" fill="#5e5e5e"/></svg><div style="left:241px;top:876.2px;width:21.4px;height:7.8px;background:#e9a135"></div><div style="left:245px;top:884px;width:13.4px;height:23.6px;background:#a87a3c"></div><div style="left:241px;top:884px;width:4.2px;height:24px;background:#e9a135"></div><div style="left:258.2px;top:884px;width:4.2px;height:24px;background:#e9a135"></div><div style="left:241px;top:908.6px;width:4.2px;height:23px;background:#e9a135"></div><div style="left:258.2px;top:908.6px;width:4.2px;height:23px;background:#e9a135"></div><div style="left:241px;top:932.6px;width:4.2px;height:23px;background:#e9a135"></div><div style="left:258.2px;top:932.6px;width:4.2px;height:23px;background:#e9a135"></div><div style="left:241px;top:956.6px;width:4.2px;height:21.4px;background:#e9a135"></div><div style="left:258.2px;top:956.6px;width:4.2px;height:21.4px;background:#e9a135"></div><div style="left:249.4px;top:892.6px;width:4.6px;height:4.6px;background:#e9a135;border-radius:50%"></div><div style="left:1903px;top:856px;width:17px;height:122px;background:#3f3f3f"></div><div style="left:1903.5px;top:856.2px;width:16.5px;height:15.2px;background:#484848;border:1px solid #575757"></div><svg style="left:1906.4px;top:861.2px;width:10.8px;height:5.6px;color:#b4b4b4;" viewBox="0 0 10.8 5.6" fill="none" stroke="currentColor" stroke-width="1.5"><path d="M0,5.6 H10.8 L5.4,0 Z" fill="currentColor" stroke="none"/></svg><div style="left:1903.5px;top:961.2px;width:16.5px;height:15.2px;background:#484848;border:1px solid #575757"></div><svg style="left:1906.4px;top:966.2px;width:10.8px;height:5.6px;color:#b4b4b4;" viewBox="0 0 10.8 5.6" fill="none" stroke="currentColor" stroke-width="1.5"><path d="M0,0 H10.8 L5.4,5.6 Z" fill="currentColor" stroke="none"/></svg><div style="left:1904px;top:873.6px;width:16px;height:55.4px;background:#4a4a4a;border:1px solid #606060"></div><div style="left:0px;top:978px;width:1903px;height:16.6px;background:#404040"></div><div style="left:1px;top:978.6px;width:16px;height:15.6px;background:#484848;border:1px solid #575757"></div><svg style="left:5.8px;top:981.2px;width:5.8px;height:10.6px;color:#b4b4b4;" viewBox="0 0 5.8 10.6" fill="none" stroke="currentColor" stroke-width="1.5"><path d="M5.8,0 V10.6 L0,5.3 Z" fill="currentColor" stroke="none"/></svg><div style="left:1886.5px;top:978.6px;width:16px;height:15.6px;background:#484848;border:1px solid #575757"></div><svg style="left:1892px;top:981.2px;width:5.8px;height:10.6px;color:#b4b4b4;" viewBox="0 0 5.8 10.6" fill="none" stroke="currentColor" stroke-width="1.5"><path d="M0,0 V10.6 L5.8,5.3 Z" fill="currentColor" stroke="none"/></svg><div style="left:18.2px;top:978.8px;width:1786.4px;height:15.4px;background:#4a4a4a;border:1px solid #606060"></div><div style="left:1903px;top:978px;width:17px;height:17px;background:#494949"></div><svg style="left:6.8px;top:1004.2px;width:15.6px;height:15.4px;color:#e4e4e4;" viewBox="0 0 15.6 15.4" fill="none" stroke="currentColor" stroke-width="1.5"><rect x="0.6" y="0.6" width="14.4" height="14.2" stroke-width="1.1"/><circle cx="7.8" cy="7.7" r="4.2" stroke-width="1.1" stroke-dasharray="1,1.2"/></svg><span class="t" style="left:475.00px;top:1007.00px;font-size:14.5px;line-height:14.5px;color:#d2d2d2;letter-spacing:0.197px;">RGB/Alpha (8-bit integer/channel)  sRGB built-in</span><div style="left:1412.3px;top:998.4px;width:134.4px;height:28.2px;border:1px solid #3b3b3b;background:#4a4a4a;box-shadow:inset 0 0 0 1px #4f4f4f"></div><span class="t" style="left:1416.60px;top:1007.00px;font-size:14.5px;line-height:14.5px;color:#d2d2d2;letter-spacing:-0.075px;text-underline-offset:2px;">512 <u>x</u> 512 (6.9 MiB)</span><div style="left:1554.4px;top:999.9px;width:25.2px;height:25.2px;background:#2f2f2f;border-radius:50%"></div><svg style="left:1554.4px;top:999.9px;width:25.2px;height:25.2px;color:#ededed;" viewBox="0 0 25.2 25.2" fill="none" stroke="currentColor" stroke-width="1.5"><path d="M12.6,1.6 V23.6 M1.6,12.6 H23.6" stroke="#3c3c3c" stroke-width="0.8" stroke-dasharray="1,1.4"/><path d="M12.6,12.6 H25" stroke-width="1.2"/><circle cx="12.6" cy="12.6" r="1.3" fill="currentColor" stroke="none"/><circle cx="24.6" cy="12.6" r="1.2" fill="currentColor" stroke="none"/></svg><span class="t" style="left:1589.50px;top:1007.00px;font-size:14.5px;line-height:14.5px;color:#d2d2d2;letter-spacing:-0.622px;">0.00°</span><span class="t" style="left:1744.00px;top:1007.00px;font-size:14.5px;line-height:14.5px;color:#d2d2d2;letter-spacing:-0.429px;">200.0%</span><div style="left:1809px;top:1009.4px;width:80px;height:5px;background:#3a3a3a;border-radius:2px;border:1px solid #333"></div><div style="left:1809px;top:1009.4px;width:27px;height:5px;background:#5f8fc2;border-radius:2px"></div><div style="left:1835.5px;top:1005.4px;width:13.6px;height:13.8px;background:#505050;border:1px solid #333;border-radius:2.5px;box-shadow:inset 0 1px 0 #5e5e5e"></div><svg style="left:1895px;top:1005.4px;width:19.6px;height:16.8px;color:#e0e0e0;" viewBox="0 0 19.6 16.8" fill="none" stroke="currentColor" stroke-width="1.5"><rect x="0.7" y="0.7" width="18.2" height="11.6" stroke-width="1.2"/><path d="M9.8,12.4 V15.6 M4.6,16 H15" stroke-width="1.2"/><circle cx="9.8" cy="6.4" r="1.2" fill="currentColor" stroke="none"/></svg></body></html>
